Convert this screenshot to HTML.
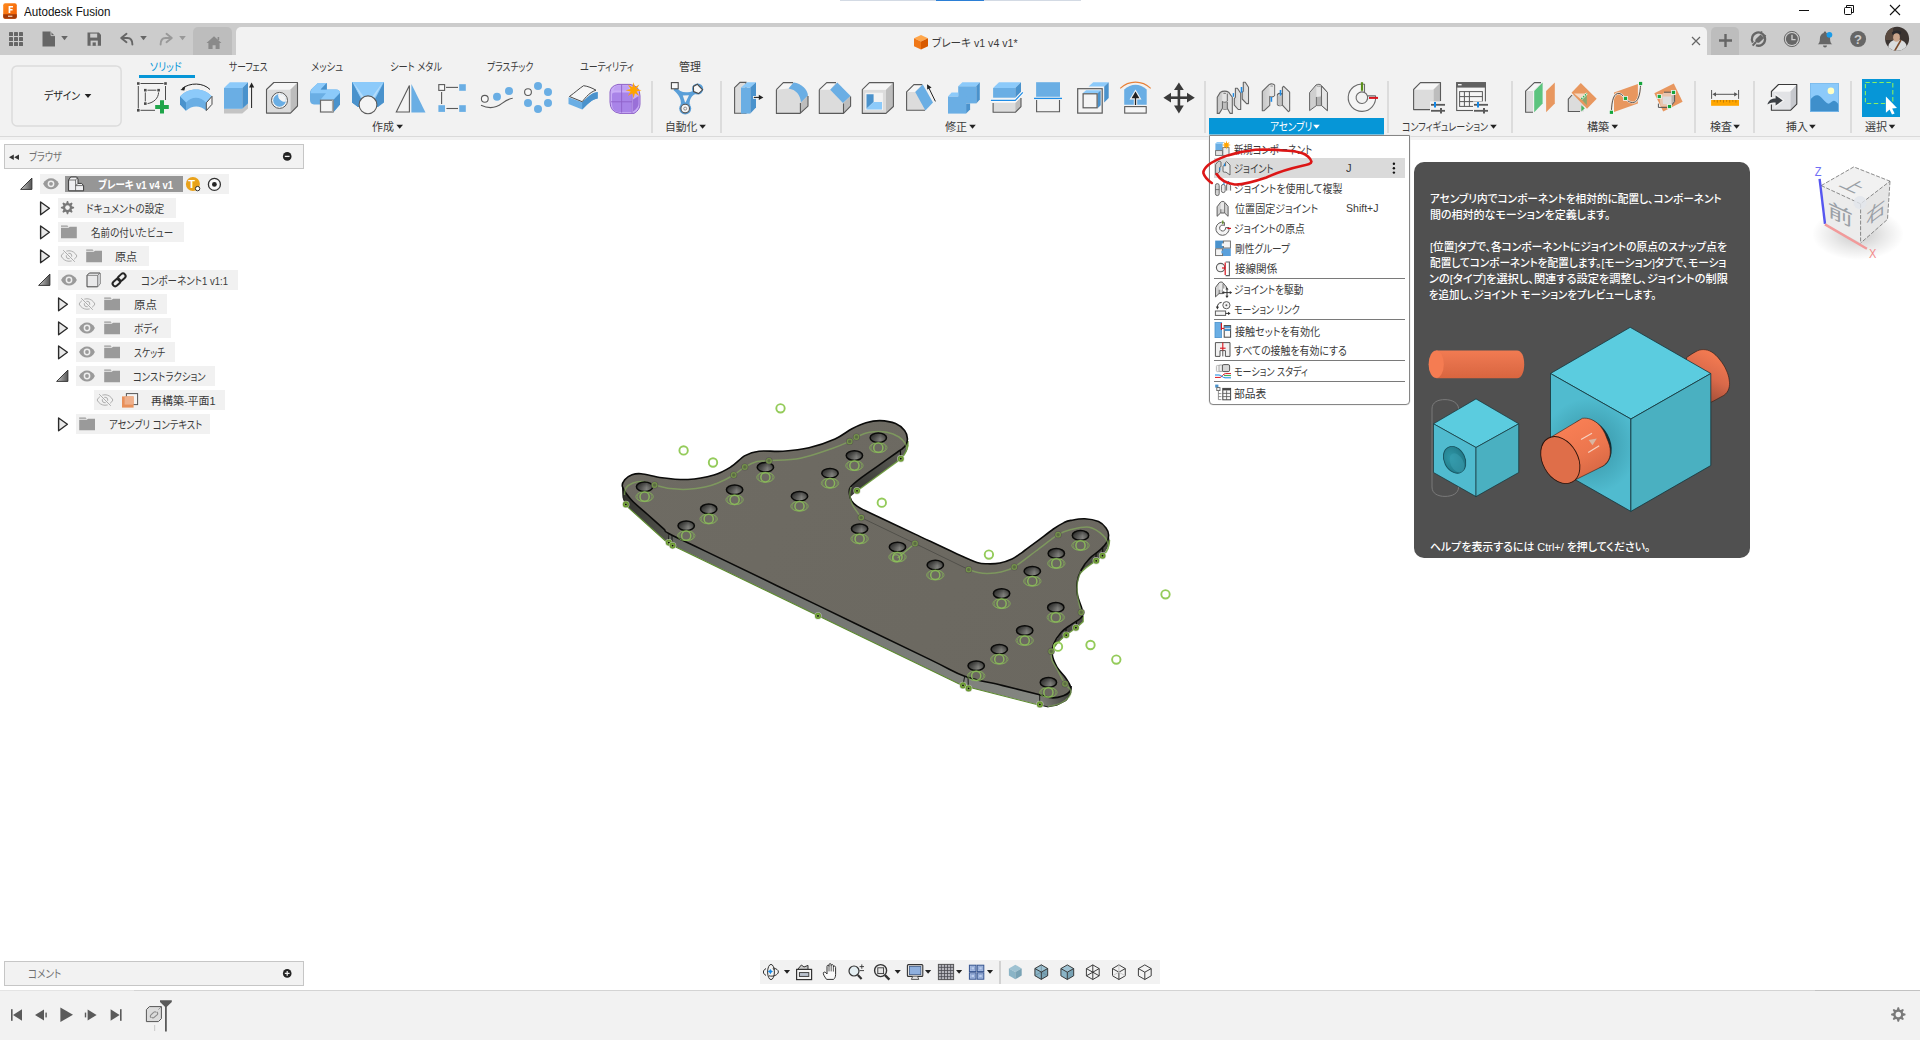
<!DOCTYPE html>
<html lang="ja"><head><meta charset="utf-8"><title>Autodesk Fusion</title>
<style>
html,body{margin:0;padding:0;background:#fff}
#root{position:relative;width:1920px;height:1040px;overflow:hidden;background:#fff;font-family:"Liberation Sans","Noto Sans CJK JP",sans-serif;font-size:12px;font-feature-settings:"palt";-webkit-font-smoothing:antialiased}
.t{position:absolute;white-space:nowrap;display:inline-block;transform-origin:0 50%;letter-spacing:0}
svg.ov{position:absolute;left:0;top:0;width:1920px;height:1040px;overflow:visible}
</style></head>
<body><div id="root">
<div style="position:absolute;left:0px;top:0px;width:1920px;height:23px;background:#fff"></div>
<div style="position:absolute;left:840px;top:0px;width:241px;height:1px;background:#d3dae4"></div>
<div style="position:absolute;left:936px;top:0px;width:48px;height:1px;background:#2b7fd6"></div>
<span class="t" style="left:23.61px;top:4.2px;font-size:12px;line-height:16px;color:#111;font-weight:400;transform:scaleX(0.9676)">Autodesk Fusion</span>
<div style="position:absolute;left:0px;top:23px;width:1920px;height:32px;background:#cccccc"></div>
<div style="position:absolute;left:193px;top:27px;width:39px;height:28px;background:#bdbdbd;border-radius:5px 5px 0 0"></div>
<div style="position:absolute;left:236px;top:27px;width:1471px;height:28px;background:#f2f2f2;border-radius:5px 5px 0 0"></div>
<div style="position:absolute;left:1711px;top:27px;width:28px;height:28px;background:#bdbdbd;border-radius:5px 5px 0 0"></div>
<span class="t" style="left:932.49px;top:34.5px;font-size:11px;line-height:16px;color:#3a3a3a;font-weight:400;transform:scaleX(0.9642)">ブレーキ v1 v4 v1*</span>
<div style="position:absolute;left:0px;top:55px;width:1920px;height:81px;background:#f2f2f2"></div>
<div style="position:absolute;left:0px;top:136px;width:1920px;height:1px;background:#dadada"></div>
<div style="position:absolute;left:0px;top:137px;width:1920px;height:3px;background:#f2f2f2"></div>
<span class="t" style="left:44.49px;top:87.5px;font-size:11px;line-height:16px;color:#222;font-weight:400;transform:scaleX(0.8957)">デザイン</span>
<span class="t" style="left:150.27px;top:59.2px;font-size:11px;line-height:16px;color:#0696d7;font-weight:400;transform:scaleX(0.8922)">ソリッド</span>
<div style="position:absolute;left:139px;top:75px;width:56px;height:3px;background:#0696d7"></div>
<span class="t" style="left:229.23px;top:59.2px;font-size:11px;line-height:16px;color:#3a3a3a;font-weight:400;transform:scaleX(0.7939)">サーフェス</span>
<span class="t" style="left:310.75px;top:59.2px;font-size:11px;line-height:16px;color:#3a3a3a;font-weight:400;transform:scaleX(0.8500)">メッシュ</span>
<span class="t" style="left:389.69px;top:59.2px;font-size:11px;line-height:16px;color:#3a3a3a;font-weight:400;transform:scaleX(0.8367)">シート メタル</span>
<span class="t" style="left:487.49px;top:59.2px;font-size:11px;line-height:16px;color:#3a3a3a;font-weight:400;transform:scaleX(0.8008)">プラスチック</span>
<span class="t" style="left:579.71px;top:59.2px;font-size:11px;line-height:16px;color:#3a3a3a;font-weight:400;transform:scaleX(0.8115)">ユーティリティ</span>
<span class="t" style="left:678.57px;top:59.2px;font-size:11px;line-height:16px;color:#3a3a3a;font-weight:400;transform:scaleX(0.9951)">管理</span>
<div style="position:absolute;left:651.2px;top:81px;width:2.0px;height:52px;background:#dcdcdc"></div>
<div style="position:absolute;left:720.2px;top:81px;width:2.0px;height:52px;background:#dcdcdc"></div>
<div style="position:absolute;left:1203.7px;top:81px;width:2.0px;height:52px;background:#dcdcdc"></div>
<div style="position:absolute;left:1387.2px;top:81px;width:2.0px;height:52px;background:#dcdcdc"></div>
<div style="position:absolute;left:1511.2px;top:81px;width:2.0px;height:52px;background:#dcdcdc"></div>
<div style="position:absolute;left:1694.2px;top:81px;width:2.0px;height:52px;background:#dcdcdc"></div>
<div style="position:absolute;left:1753.2px;top:81px;width:2.0px;height:52px;background:#dcdcdc"></div>
<div style="position:absolute;left:1849.7px;top:81px;width:2.0px;height:52px;background:#dcdcdc"></div>
<div style="position:absolute;left:1209px;top:118px;width:175px;height:18px;background:#0696d7"></div>
<span class="t" style="left:372.16px;top:119.0px;font-size:11px;line-height:16px;color:#3a3a3a;font-weight:400;transform:scaleX(0.9985)">作成</span>
<span class="t" style="left:665.13px;top:119.0px;font-size:11px;line-height:16px;color:#3a3a3a;font-weight:400;transform:scaleX(0.9802)">自動化</span>
<span class="t" style="left:944.71px;top:119.0px;font-size:11px;line-height:16px;color:#3a3a3a;font-weight:400;transform:scaleX(1.0099)">修正</span>
<span class="t" style="left:1270.44px;top:119.0px;font-size:11px;line-height:16px;color:#fff;font-weight:400;transform:scaleX(0.8725)">アセンブリ</span>
<span class="t" style="left:1402.48px;top:119.0px;font-size:11px;line-height:16px;color:#3a3a3a;font-weight:400;transform:scaleX(0.8184)">コンフィギュレーション</span>
<span class="t" style="left:1587.06px;top:119.0px;font-size:11px;line-height:16px;color:#3a3a3a;font-weight:400;transform:scaleX(1.0053)">構築</span>
<span class="t" style="left:1709.67px;top:119.0px;font-size:11px;line-height:16px;color:#3a3a3a;font-weight:400;transform:scaleX(0.9952)">検査</span>
<span class="t" style="left:1785.81px;top:119.0px;font-size:11px;line-height:16px;color:#3a3a3a;font-weight:400;transform:scaleX(0.9901)">挿入</span>
<span class="t" style="left:1865.20px;top:119.0px;font-size:11px;line-height:16px;color:#3a3a3a;font-weight:400;transform:scaleX(1.0019)">選択</span>
<div style="position:absolute;left:1862px;top:79px;width:38px;height:38px;background:#0696d7"></div>
<div style="position:absolute;left:4px;top:144px;width:300px;height:25px;box-sizing:border-box;border:1px solid #c6c6c6;background:#f2f2f2"></div>
<span class="t" style="left:28.98px;top:149.0px;font-size:11px;line-height:16px;color:#707070;font-weight:400;transform:scaleX(0.8287)">ブラウザ</span>
<div style="position:absolute;left:40px;top:174px;width:189px;height:20px;background:#f1f1f1"></div>
<div style="position:absolute;left:58px;top:198px;width:118px;height:20px;background:#f1f1f1"></div>
<div style="position:absolute;left:58px;top:222px;width:126px;height:20px;background:#f1f1f1"></div>
<div style="position:absolute;left:58px;top:246px;width:91px;height:20px;background:#f1f1f1"></div>
<div style="position:absolute;left:58px;top:270px;width:180px;height:20px;background:#f1f1f1"></div>
<div style="position:absolute;left:76px;top:294px;width:91px;height:20px;background:#f1f1f1"></div>
<div style="position:absolute;left:76px;top:318px;width:95px;height:20px;background:#f1f1f1"></div>
<div style="position:absolute;left:76px;top:342px;width:99px;height:20px;background:#f1f1f1"></div>
<div style="position:absolute;left:76px;top:366px;width:139px;height:20px;background:#f1f1f1"></div>
<div style="position:absolute;left:94px;top:390px;width:131px;height:20px;background:#f1f1f1"></div>
<div style="position:absolute;left:76px;top:414px;width:134px;height:20px;background:#f1f1f1"></div>
<div style="position:absolute;left:65px;top:176px;width:118px;height:16px;background:#969696"></div>
<span class="t" style="left:98.36px;top:176.6px;font-size:11px;line-height:16px;color:#fff;font-weight:700;transform:scaleX(0.8626)">ブレーキ v1 v4 v1</span>
<span class="t" style="left:86.06px;top:201.0px;font-size:11px;line-height:16px;color:#3a3a3a;font-weight:400;transform:scaleX(0.8798)">ドキュメントの設定</span>
<span class="t" style="left:91.15px;top:225.0px;font-size:11px;line-height:16px;color:#3a3a3a;font-weight:400;transform:scaleX(0.8677)">名前の付いたビュー</span>
<span class="t" style="left:115.42px;top:249.0px;font-size:11px;line-height:16px;color:#3a3a3a;font-weight:400;transform:scaleX(1.0092)">原点</span>
<span class="t" style="left:140.79px;top:273.0px;font-size:11px;line-height:16px;color:#3a3a3a;font-weight:400;transform:scaleX(0.8659)">コンポーネント1 v1:1</span>
<span class="t" style="left:133.62px;top:297.0px;font-size:11px;line-height:16px;color:#3a3a3a;font-weight:400;transform:scaleX(1.0375)">原点</span>
<span class="t" style="left:134.02px;top:321.0px;font-size:11px;line-height:16px;color:#3a3a3a;font-weight:400;transform:scaleX(0.8651)">ボディ</span>
<span class="t" style="left:134.13px;top:345.0px;font-size:11px;line-height:16px;color:#3a3a3a;font-weight:400;transform:scaleX(0.8023)">スケッチ</span>
<span class="t" style="left:133.30px;top:369.0px;font-size:11px;line-height:16px;color:#3a3a3a;font-weight:400;transform:scaleX(0.8444)">コンストラクション</span>
<span class="t" style="left:151.27px;top:393.0px;font-size:11px;line-height:16px;color:#3a3a3a;font-weight:400;transform:scaleX(0.9963)">再構築-平面1</span>
<span class="t" style="left:108.52px;top:417.0px;font-size:11px;line-height:16px;color:#3a3a3a;font-weight:400;transform:scaleX(0.8466)">アセンブリ コンテキスト</span>
<div style="position:absolute;left:4px;top:961px;width:300px;height:25px;box-sizing:border-box;border:1px solid #c6c6c6;background:#f2f2f2"></div>
<span class="t" style="left:28.23px;top:966.0px;font-size:11px;line-height:16px;color:#707070;font-weight:400;transform:scaleX(0.8705)">コメント</span>
<div style="position:absolute;left:0px;top:990px;width:1920px;height:1px;background:#d4d4d4"></div>
<div style="position:absolute;left:0px;top:991px;width:1920px;height:49px;background:#f2f2f2"></div>
<div style="position:absolute;left:0px;top:990px;width:134px;height:1px;background:#e4e4e4"></div>
<div style="position:absolute;left:1815px;top:990px;width:105px;height:1px;background:#c2c2c2"></div>
<div style="position:absolute;left:760px;top:960px;width:400px;height:24px;background:#f2f2f2"></div>
<div style="position:absolute;left:999px;top:961px;width:2px;height:23px;background:#d2d2d2"></div>
<svg class="ov" width="1920" height="1040" viewBox="0 0 1920 1040">
<defs><linearGradient id="sd1" gradientUnits="userSpaceOnUse" x1="668" y1="535" x2="1040" y2="700"><stop offset="0" stop-color="#62645f"/><stop offset="0.25" stop-color="#70726e"/><stop offset="1" stop-color="#848681"/></linearGradient><linearGradient id="sd0" gradientUnits="userSpaceOnUse" x1="623" y1="490" x2="668" y2="540"><stop offset="0" stop-color="#2f2f2b"/><stop offset="1" stop-color="#54554f"/></linearGradient><linearGradient id="sd3" gradientUnits="userSpaceOnUse" x1="1040" y1="700" x2="1072" y2="690"><stop offset="0" stop-color="#7c7c76"/><stop offset="1" stop-color="#3c3c38"/></linearGradient><linearGradient id="sd2" gradientUnits="userSpaceOnUse" x1="856" y1="490" x2="905" y2="450"><stop offset="0" stop-color="#3a3a36"/><stop offset="0.5" stop-color="#4c4c47"/><stop offset="1" stop-color="#5e5e58"/></linearGradient><linearGradient id="hg" x1="0" y1="0" x2="1" y2="0"><stop offset="0" stop-color="#3e3e3c"/><stop offset="0.3" stop-color="#5e5e5b"/><stop offset="0.62" stop-color="#8a8a86"/><stop offset="0.85" stop-color="#6a6a66"/><stop offset="1" stop-color="#444441"/></linearGradient><linearGradient id="hg2" x1="0" y1="0" x2="0" y2="1"><stop offset="0" stop-color="#000" stop-opacity="0.5"/><stop offset="0.55" stop-color="#000" stop-opacity="0.12"/><stop offset="1" stop-color="#000" stop-opacity="0"/></linearGradient><linearGradient id="tf" gradientUnits="userSpaceOnUse" x1="620" y1="430" x2="1100" y2="700"><stop offset="0" stop-color="#6e6b63"/><stop offset="1" stop-color="#6b6860"/></linearGradient></defs>
<polygon points="668.0,543.0 962.3,685.4 1039.7,705.0 1040.0,690.0 964.7,672.0 668.8,529.0" fill="url(#sd1)" />
<polygon points="622.5,486.7 623.0,497.6 625.6,505.0 668.0,543.0 668.8,529.0 628.0,490.0" fill="url(#sd0)" />
<polygon points="1039.7,690.0 1039.7,705.0 1047.8,706.9 1057.0,705.2 1066.4,700.4 1070.8,694.0 1071.4,686.0 1060.0,688.0" fill="url(#sd3)" />
<path d="M622.5 486.7 L623 497.6 L625.6 505 M1039.7 705 L1047.8 706.9 L1057 705.2 L1066.4 700.4 L1070.8 693 L1071.4 686" fill="none" stroke="#1a1a18" stroke-width="1" stroke-linejoin="round"/>
<polygon points="907.4,438.6 908.2,446.0 906.4,452.0 900.8,459.0 857.0,491.0 850.2,497.0 849.4,490.0 855.8,481.5 902.5,448.6" fill="url(#sd2)" />
<path d="M908 441 C908.6 447 907 452.4 900.8 459 L857 491" fill="none" stroke="#6d9c3c" stroke-width="1.4" opacity="0.9"/>
<line x1="900.4" y1="449.6" x2="900.6" y2="458.4" stroke="#0b0b0a" stroke-width="1.2" />
<polygon points="1108.6,535.0 1109.6,540.0 1108.9,545.5 1102.9,555.4 1096.2,560.9 1085.6,567.7 1079.6,574.0 1081.3,569.8 1089.8,558.2 1100.4,549.7 1106.7,542.3" fill="#4b4b46" />
<path d="M1109.6 540 C1109.8 547 1107 551.6 1102.9 555.4 L1096.2 560.9 C1091 564 1084 569 1079.6 574" fill="none" stroke="#6d9c3c" stroke-width="1.3" opacity="0.9"/>
<path d="M1102.7 547.4 V555.6 M1096 552.8 V561" fill="none" stroke="#0b0b0a" stroke-width="1.1" />
<polygon points="1083.0,614.2 1083.2,621.6 1076.7,627.6 1066.1,635.0 1058.1,642.8 1051.4,651.6 1053.8,643.9 1061.3,632.2 1070.8,624.8 1080.3,618.5" fill="#4b4b46" />
<path d="M1083.2 616 V621.6 L1076.7 627.6 L1066.1 635 C1061.6 638.6 1055 645 1051.4 651.6" fill="none" stroke="#6d9c3c" stroke-width="1.3" opacity="0.9"/>
<path d="M1076.5 620.6 V627.6 M1066 628.6 V635" fill="none" stroke="#0b0b0a" stroke-width="1.1" />
<path d="M622.5 486.7 C621.4 483.3 623.5 481.6 625.0 479.6 C626.5 477.7 628.8 476.0 631.5 475.0 C634.2 474.0 635.9 473.2 641.0 473.7 C646.1 474.1 654.2 476.7 662.0 477.7 C669.8 478.7 679.3 479.9 688.0 479.5 C696.7 479.1 706.8 477.1 714.0 475.0 C721.2 472.9 725.8 470.0 731.0 466.8 C736.2 463.6 740.3 458.2 745.0 455.6 C749.7 453.0 752.7 451.9 759.0 451.2 C765.3 450.5 774.7 451.8 783.0 451.2 C791.3 450.6 800.3 449.8 809.0 447.8 C817.7 445.8 827.8 442.2 835.0 439.0 C842.2 435.8 846.8 431.4 852.0 428.7 C857.2 426.0 861.3 424.0 866.0 422.7 C870.7 421.4 875.1 420.5 880.0 420.6 C884.9 420.8 891.5 421.9 895.6 423.6 C899.7 425.3 902.6 428.1 904.6 430.6 C906.6 433.1 907.2 436.3 907.4 438.6 C907.6 440.9 906.8 442.9 906.0 444.6 C905.2 446.3 904.0 447.3 902.5 448.6 C901.0 449.9 900.8 449.8 896.9 452.5 C893.0 455.3 885.1 460.9 879.1 465.1 C873.2 469.2 866.2 473.9 861.4 477.6 C856.6 481.2 852.6 484.3 850.6 487.0 C848.6 489.7 849.2 491.3 849.4 493.6 C849.6 495.9 850.3 498.9 851.6 501.0 C852.9 503.1 855.1 504.8 857.0 506.2 C858.9 507.6 859.9 508.1 863.0 509.6 C866.1 511.1 866.8 511.4 875.5 515.5 C884.1 519.6 901.8 527.9 915.0 534.1 C928.2 540.3 944.2 548.0 954.5 552.7 C964.9 557.4 971.5 560.6 977.0 562.4 C982.5 564.2 983.9 563.7 987.7 563.8 C991.5 563.9 996.0 563.8 1000.0 563.0 C1004.0 562.2 1008.7 560.5 1012.0 559.0 C1015.3 557.5 1017.9 555.3 1020.0 553.9 C1022.1 552.5 1021.4 552.9 1024.6 550.5 C1027.7 548.1 1034.2 543.3 1039.0 539.8 C1043.8 536.2 1049.3 531.9 1053.4 529.0 C1057.6 526.1 1061.1 524.0 1064.0 522.6 C1066.9 521.2 1067.3 521.0 1070.8 520.4 C1074.2 519.8 1080.1 518.6 1084.7 518.8 C1089.3 519.0 1095.0 520.1 1098.5 521.6 C1102.0 523.1 1104.3 525.8 1106.0 528.0 C1107.7 530.2 1108.5 532.6 1108.6 535.0 C1108.7 537.4 1108.1 539.8 1106.7 542.3 C1105.3 544.8 1103.2 547.1 1100.4 549.7 C1097.6 552.4 1093.0 554.9 1089.8 558.2 C1086.6 561.6 1083.4 565.8 1081.3 569.8 C1079.2 573.8 1077.7 578.3 1077.1 582.5 C1076.5 586.7 1076.8 591.2 1077.5 595.2 C1078.2 599.2 1080.4 603.6 1081.3 606.8 C1082.2 610.0 1083.2 612.2 1083.0 614.2 C1082.8 616.2 1082.3 616.7 1080.3 618.5 C1078.3 620.3 1074.0 622.5 1070.8 624.8 C1067.6 627.1 1064.1 629.0 1061.3 632.2 C1058.5 635.4 1055.3 640.2 1053.8 643.9 C1052.3 647.6 1051.7 650.5 1052.2 654.4 C1052.7 658.3 1054.8 663.2 1057.0 667.1 C1059.2 671.0 1063.3 674.5 1065.5 677.7 C1067.7 680.9 1069.6 683.9 1070.3 686.2 C1071.0 688.5 1070.8 689.9 1069.7 691.5 C1068.6 693.1 1066.4 694.7 1063.4 695.7 C1060.4 696.8 1055.7 698.0 1051.7 697.8 C1047.8 697.6 1048.0 696.8 1039.7 694.7 C1031.4 692.6 1014.5 688.5 1002.0 685.4 C989.5 682.3 976.8 680.6 964.7 676.2 C952.6 671.8 953.9 671.0 929.2 659.1 C904.5 647.2 854.2 622.9 816.8 604.9 C779.3 586.8 729.0 562.5 704.3 550.6 C679.6 538.7 675.6 537.1 668.8 533.5 C662.0 529.9 667.2 532.1 663.7 528.9 C660.2 525.8 653.0 519.3 647.6 514.5 C642.2 509.6 635.7 504.6 631.5 500.0 C627.3 495.3 623.6 490.1 622.5 486.7 Z" fill="url(#tf)" stroke="#0b0b0a" stroke-width="1.6" stroke-linejoin="round"/>
<path d="M668.8 533.5 L668.4 543 M672 535.2 L672 545 M964.7 676.2 L963 685.4 M968 677.2 L968.4 688 M1039.7 694.7 V705" fill="none" stroke="#0d0d0c" stroke-width="0.9" />
<path d="M624.4 495.0 C624.7 493.8 624.6 490.0 626.0 488.0 C627.4 486.0 630.2 484.1 633.0 483.0 C635.8 481.9 639.4 481.3 643.0 481.6 C646.6 481.9 650.1 483.8 654.6 485.0 C659.1 486.2 664.4 487.9 670.0 488.6 C675.6 489.3 682.2 489.6 688.0 489.3 C693.8 489.0 700.1 488.0 705.0 487.0 C709.9 486.0 712.5 485.3 717.3 483.3 C722.1 481.3 729.1 477.8 733.7 475.0 C738.3 472.2 741.1 469.0 745.0 466.8 C748.9 464.6 753.0 462.6 757.0 461.6 C761.0 460.6 762.0 461.4 769.2 460.8 C776.4 460.2 790.0 460.2 800.4 458.2 C810.8 456.2 823.3 451.5 831.5 448.7 C839.7 445.9 845.5 443.3 849.7 441.4 C853.9 439.4 853.3 438.5 856.6 437.0 C859.9 435.5 864.6 433.0 869.6 432.2 C874.6 431.4 882.0 431.4 886.9 432.2 C891.8 433.0 895.9 435.0 899.0 437.0 C902.1 439.0 904.3 441.8 905.6 444.0 C906.9 446.2 906.8 449.0 907.0 450.0" fill="none" stroke="#88b65c" stroke-width="1.5" opacity="0.6"/>
<path d="M851.0 487.0 C850.8 488.3 849.5 492.0 849.8 495.0 C850.1 498.0 850.7 501.2 852.6 505.0 C854.5 508.8 859.8 515.5 861.2 517.6" fill="none" stroke="#88b65c" stroke-width="1.5" opacity="0.6"/>
<polyline points="861.2,517.6 915.0,543.5 968.6,569.6" fill="none" stroke="#4e4d47" stroke-width="0.9" />
<path d="M968.6 569.6 C970.2 570.1 974.8 572.0 978.0 572.6 C981.2 573.2 983.9 573.6 987.7 573.5 C991.5 573.4 996.6 573.1 1001.0 572.0 C1005.4 570.9 1008.5 570.5 1014.3 567.0 C1020.1 563.5 1028.7 556.4 1036.0 551.0 C1043.3 545.6 1052.3 538.3 1058.1 534.7 C1063.9 531.1 1065.6 530.8 1070.8 529.6 C1076.0 528.4 1083.9 526.3 1089.3 527.3 C1094.7 528.3 1099.8 532.4 1103.0 535.4 C1106.2 538.4 1107.9 542.1 1108.4 545.0 C1108.9 547.9 1106.4 551.7 1106.0 553.0" fill="none" stroke="#88b65c" stroke-width="1.5" opacity="0.6"/>
<path d="M1051.2 651.3 C1051.3 652.8 1051.0 657.0 1052.0 660.0 C1053.0 663.0 1054.8 665.0 1057.0 669.0 C1059.2 673.0 1062.7 680.3 1065.0 683.8 C1067.3 687.3 1069.9 687.8 1070.6 690.0 C1071.3 692.2 1070.8 694.7 1069.0 697.0 C1067.2 699.3 1063.5 702.0 1060.0 703.6 C1056.5 705.2 1050.0 706.1 1048.0 706.6" fill="none" stroke="#88b65c" stroke-width="1.5" opacity="0.6"/>
<path d="M1081.0 571.0 C1080.4 572.9 1078.0 578.4 1077.4 582.6 C1076.8 586.8 1077.0 591.0 1077.6 596.0 C1078.2 601.0 1080.6 609.6 1081.2 612.3" fill="none" stroke="#88b65c" stroke-width="1.5" opacity="0.6"/>
<polyline points="897.6,558.0 915.0,543.5" fill="none" stroke="#88b65c" stroke-width="1.1" opacity="0.8"/>
<path d="M625.6 505.2 L668 543.2 L962.3 685.6 L1039.7 705.2" fill="none" stroke="#5b8a2c" stroke-width="1.1" />
<ellipse cx="644.6" cy="486.7" rx="8.2" ry="4.8" fill="url(#hg)" />
<ellipse cx="644.6" cy="486.7" rx="8.2" ry="4.8" fill="url(#hg2)" stroke="#0b0b0a" stroke-width="1.5" />
<ellipse cx="644.6" cy="496.7" rx="8.8" ry="5" fill="none" stroke="#8abf58" stroke-width="1" opacity="0.55"/>
<path d="M641.7 492.2 A4.5 4.5 0 0 0 641.7 501.2" fill="none" stroke="#8abf58" stroke-width="1" opacity="0.5"/>
<path d="M647.5 492.2 A4.5 4.5 0 0 1 647.5 501.2" fill="none" stroke="#8abf58" stroke-width="1" opacity="0.5"/>
<circle cx="644.6" cy="496.7" r="4.6" fill="none" stroke="#8cbe5a" stroke-width="1.5" opacity="0.9"/>
<ellipse cx="686.2" cy="525.7" rx="8.2" ry="4.8" fill="url(#hg)" />
<ellipse cx="686.2" cy="525.7" rx="8.2" ry="4.8" fill="url(#hg2)" stroke="#0b0b0a" stroke-width="1.5" />
<ellipse cx="686.2" cy="535.7" rx="8.8" ry="5" fill="none" stroke="#8abf58" stroke-width="1" opacity="0.55"/>
<path d="M683.3 531.2 A4.5 4.5 0 0 0 683.3 540.2" fill="none" stroke="#8abf58" stroke-width="1" opacity="0.5"/>
<path d="M689.1 531.2 A4.5 4.5 0 0 1 689.1 540.2" fill="none" stroke="#8abf58" stroke-width="1" opacity="0.5"/>
<circle cx="686.2" cy="535.7" r="4.6" fill="none" stroke="#8cbe5a" stroke-width="1.5" opacity="0.9"/>
<ellipse cx="708.7" cy="508.9" rx="8.2" ry="4.8" fill="url(#hg)" />
<ellipse cx="708.7" cy="508.9" rx="8.2" ry="4.8" fill="url(#hg2)" stroke="#0b0b0a" stroke-width="1.5" />
<ellipse cx="708.7" cy="518.9" rx="8.8" ry="5" fill="none" stroke="#8abf58" stroke-width="1" opacity="0.55"/>
<path d="M705.8 514.4 A4.5 4.5 0 0 0 705.8 523.4" fill="none" stroke="#8abf58" stroke-width="1" opacity="0.5"/>
<path d="M711.6 514.4 A4.5 4.5 0 0 1 711.6 523.4" fill="none" stroke="#8abf58" stroke-width="1" opacity="0.5"/>
<circle cx="708.7" cy="518.9" r="4.6" fill="none" stroke="#8cbe5a" stroke-width="1.5" opacity="0.9"/>
<ellipse cx="734.6" cy="489.8" rx="8.2" ry="4.8" fill="url(#hg)" />
<ellipse cx="734.6" cy="489.8" rx="8.2" ry="4.8" fill="url(#hg2)" stroke="#0b0b0a" stroke-width="1.5" />
<ellipse cx="734.6" cy="499.8" rx="8.8" ry="5" fill="none" stroke="#8abf58" stroke-width="1" opacity="0.55"/>
<path d="M731.7 495.3 A4.5 4.5 0 0 0 731.7 504.3" fill="none" stroke="#8abf58" stroke-width="1" opacity="0.5"/>
<path d="M737.5 495.3 A4.5 4.5 0 0 1 737.5 504.3" fill="none" stroke="#8abf58" stroke-width="1" opacity="0.5"/>
<circle cx="734.6" cy="499.8" r="4.6" fill="none" stroke="#8cbe5a" stroke-width="1.5" opacity="0.9"/>
<ellipse cx="765.4" cy="467.3" rx="8.2" ry="4.8" fill="url(#hg)" />
<ellipse cx="765.4" cy="467.3" rx="8.2" ry="4.8" fill="url(#hg2)" stroke="#0b0b0a" stroke-width="1.5" />
<ellipse cx="765.4" cy="477.3" rx="8.8" ry="5" fill="none" stroke="#8abf58" stroke-width="1" opacity="0.55"/>
<path d="M762.5 472.8 A4.5 4.5 0 0 0 762.5 481.8" fill="none" stroke="#8abf58" stroke-width="1" opacity="0.5"/>
<path d="M768.3 472.8 A4.5 4.5 0 0 1 768.3 481.8" fill="none" stroke="#8abf58" stroke-width="1" opacity="0.5"/>
<circle cx="765.4" cy="477.3" r="4.6" fill="none" stroke="#8cbe5a" stroke-width="1.5" opacity="0.9"/>
<ellipse cx="799.5" cy="496.2" rx="8.2" ry="4.8" fill="url(#hg)" />
<ellipse cx="799.5" cy="496.2" rx="8.2" ry="4.8" fill="url(#hg2)" stroke="#0b0b0a" stroke-width="1.5" />
<ellipse cx="799.5" cy="506.2" rx="8.8" ry="5" fill="none" stroke="#8abf58" stroke-width="1" opacity="0.55"/>
<path d="M796.6 501.7 A4.5 4.5 0 0 0 796.6 510.7" fill="none" stroke="#8abf58" stroke-width="1" opacity="0.5"/>
<path d="M802.4 501.7 A4.5 4.5 0 0 1 802.4 510.7" fill="none" stroke="#8abf58" stroke-width="1" opacity="0.5"/>
<circle cx="799.5" cy="506.2" r="4.6" fill="none" stroke="#8cbe5a" stroke-width="1.5" opacity="0.9"/>
<ellipse cx="830.0" cy="473.2" rx="8.2" ry="4.8" fill="url(#hg)" />
<ellipse cx="830.0" cy="473.2" rx="8.2" ry="4.8" fill="url(#hg2)" stroke="#0b0b0a" stroke-width="1.5" />
<ellipse cx="830.0" cy="483.2" rx="8.8" ry="5" fill="none" stroke="#8abf58" stroke-width="1" opacity="0.55"/>
<path d="M827.1 478.7 A4.5 4.5 0 0 0 827.1 487.7" fill="none" stroke="#8abf58" stroke-width="1" opacity="0.5"/>
<path d="M832.9 478.7 A4.5 4.5 0 0 1 832.9 487.7" fill="none" stroke="#8abf58" stroke-width="1" opacity="0.5"/>
<circle cx="830.0" cy="483.2" r="4.6" fill="none" stroke="#8cbe5a" stroke-width="1.5" opacity="0.9"/>
<ellipse cx="854.4" cy="455.6" rx="8.2" ry="4.8" fill="url(#hg)" />
<ellipse cx="854.4" cy="455.6" rx="8.2" ry="4.8" fill="url(#hg2)" stroke="#0b0b0a" stroke-width="1.5" />
<ellipse cx="854.4" cy="465.6" rx="8.8" ry="5" fill="none" stroke="#8abf58" stroke-width="1" opacity="0.55"/>
<path d="M851.5 461.1 A4.5 4.5 0 0 0 851.5 470.1" fill="none" stroke="#8abf58" stroke-width="1" opacity="0.5"/>
<path d="M857.3 461.1 A4.5 4.5 0 0 1 857.3 470.1" fill="none" stroke="#8abf58" stroke-width="1" opacity="0.5"/>
<circle cx="854.4" cy="465.6" r="4.6" fill="none" stroke="#8cbe5a" stroke-width="1.5" opacity="0.9"/>
<ellipse cx="878.3" cy="437.7" rx="8.2" ry="4.8" fill="url(#hg)" />
<ellipse cx="878.3" cy="437.7" rx="8.2" ry="4.8" fill="url(#hg2)" stroke="#0b0b0a" stroke-width="1.5" />
<ellipse cx="878.3" cy="447.7" rx="8.8" ry="5" fill="none" stroke="#8abf58" stroke-width="1" opacity="0.55"/>
<path d="M875.4 443.2 A4.5 4.5 0 0 0 875.4 452.2" fill="none" stroke="#8abf58" stroke-width="1" opacity="0.5"/>
<path d="M881.2 443.2 A4.5 4.5 0 0 1 881.2 452.2" fill="none" stroke="#8abf58" stroke-width="1" opacity="0.5"/>
<circle cx="878.3" cy="447.7" r="4.6" fill="none" stroke="#8cbe5a" stroke-width="1.5" opacity="0.9"/>
<ellipse cx="859.6" cy="528.8" rx="8.2" ry="4.8" fill="url(#hg)" />
<ellipse cx="859.6" cy="528.8" rx="8.2" ry="4.8" fill="url(#hg2)" stroke="#0b0b0a" stroke-width="1.5" />
<ellipse cx="859.6" cy="538.8" rx="8.8" ry="5" fill="none" stroke="#8abf58" stroke-width="1" opacity="0.55"/>
<path d="M856.7 534.3 A4.5 4.5 0 0 0 856.7 543.3" fill="none" stroke="#8abf58" stroke-width="1" opacity="0.5"/>
<path d="M862.5 534.3 A4.5 4.5 0 0 1 862.5 543.3" fill="none" stroke="#8abf58" stroke-width="1" opacity="0.5"/>
<circle cx="859.6" cy="538.8" r="4.6" fill="none" stroke="#8cbe5a" stroke-width="1.5" opacity="0.9"/>
<ellipse cx="897.5" cy="547.0" rx="8.2" ry="4.8" fill="url(#hg)" />
<ellipse cx="897.5" cy="547.0" rx="8.2" ry="4.8" fill="url(#hg2)" stroke="#0b0b0a" stroke-width="1.5" />
<ellipse cx="897.5" cy="557.0" rx="8.8" ry="5" fill="none" stroke="#8abf58" stroke-width="1" opacity="0.55"/>
<path d="M894.6 552.5 A4.5 4.5 0 0 0 894.6 561.5" fill="none" stroke="#8abf58" stroke-width="1" opacity="0.5"/>
<path d="M900.4 552.5 A4.5 4.5 0 0 1 900.4 561.5" fill="none" stroke="#8abf58" stroke-width="1" opacity="0.5"/>
<circle cx="897.5" cy="557.0" r="4.6" fill="none" stroke="#8cbe5a" stroke-width="1.5" opacity="0.9"/>
<ellipse cx="935.3" cy="565.0" rx="8.2" ry="4.8" fill="url(#hg)" />
<ellipse cx="935.3" cy="565.0" rx="8.2" ry="4.8" fill="url(#hg2)" stroke="#0b0b0a" stroke-width="1.5" />
<ellipse cx="935.3" cy="575.0" rx="8.8" ry="5" fill="none" stroke="#8abf58" stroke-width="1" opacity="0.55"/>
<path d="M932.4 570.5 A4.5 4.5 0 0 0 932.4 579.5" fill="none" stroke="#8abf58" stroke-width="1" opacity="0.5"/>
<path d="M938.2 570.5 A4.5 4.5 0 0 1 938.2 579.5" fill="none" stroke="#8abf58" stroke-width="1" opacity="0.5"/>
<circle cx="935.3" cy="575.0" r="4.6" fill="none" stroke="#8cbe5a" stroke-width="1.5" opacity="0.9"/>
<ellipse cx="1001.6" cy="593.6" rx="8.2" ry="4.8" fill="url(#hg)" />
<ellipse cx="1001.6" cy="593.6" rx="8.2" ry="4.8" fill="url(#hg2)" stroke="#0b0b0a" stroke-width="1.5" />
<ellipse cx="1001.6" cy="603.6" rx="8.8" ry="5" fill="none" stroke="#8abf58" stroke-width="1" opacity="0.55"/>
<path d="M998.7 599.1 A4.5 4.5 0 0 0 998.7 608.1" fill="none" stroke="#8abf58" stroke-width="1" opacity="0.5"/>
<path d="M1004.5 599.1 A4.5 4.5 0 0 1 1004.5 608.1" fill="none" stroke="#8abf58" stroke-width="1" opacity="0.5"/>
<circle cx="1001.6" cy="603.6" r="4.6" fill="none" stroke="#8cbe5a" stroke-width="1.5" opacity="0.9"/>
<ellipse cx="1032.3" cy="571.2" rx="8.2" ry="4.8" fill="url(#hg)" />
<ellipse cx="1032.3" cy="571.2" rx="8.2" ry="4.8" fill="url(#hg2)" stroke="#0b0b0a" stroke-width="1.5" />
<ellipse cx="1032.3" cy="581.2" rx="8.8" ry="5" fill="none" stroke="#8abf58" stroke-width="1" opacity="0.55"/>
<path d="M1029.4 576.7 A4.5 4.5 0 0 0 1029.4 585.7" fill="none" stroke="#8abf58" stroke-width="1" opacity="0.5"/>
<path d="M1035.2 576.7 A4.5 4.5 0 0 1 1035.2 585.7" fill="none" stroke="#8abf58" stroke-width="1" opacity="0.5"/>
<circle cx="1032.3" cy="581.2" r="4.6" fill="none" stroke="#8cbe5a" stroke-width="1.5" opacity="0.9"/>
<ellipse cx="1056.3" cy="553.4" rx="8.2" ry="4.8" fill="url(#hg)" />
<ellipse cx="1056.3" cy="553.4" rx="8.2" ry="4.8" fill="url(#hg2)" stroke="#0b0b0a" stroke-width="1.5" />
<ellipse cx="1056.3" cy="563.4" rx="8.8" ry="5" fill="none" stroke="#8abf58" stroke-width="1" opacity="0.55"/>
<path d="M1053.4 558.9 A4.5 4.5 0 0 0 1053.4 567.9" fill="none" stroke="#8abf58" stroke-width="1" opacity="0.5"/>
<path d="M1059.2 558.9 A4.5 4.5 0 0 1 1059.2 567.9" fill="none" stroke="#8abf58" stroke-width="1" opacity="0.5"/>
<circle cx="1056.3" cy="563.4" r="4.6" fill="none" stroke="#8cbe5a" stroke-width="1.5" opacity="0.9"/>
<ellipse cx="1080.5" cy="535.4" rx="8.2" ry="4.8" fill="url(#hg)" />
<ellipse cx="1080.5" cy="535.4" rx="8.2" ry="4.8" fill="url(#hg2)" stroke="#0b0b0a" stroke-width="1.5" />
<ellipse cx="1080.5" cy="545.4" rx="8.8" ry="5" fill="none" stroke="#8abf58" stroke-width="1" opacity="0.55"/>
<path d="M1077.6 540.9 A4.5 4.5 0 0 0 1077.6 549.9" fill="none" stroke="#8abf58" stroke-width="1" opacity="0.5"/>
<path d="M1083.4 540.9 A4.5 4.5 0 0 1 1083.4 549.9" fill="none" stroke="#8abf58" stroke-width="1" opacity="0.5"/>
<circle cx="1080.5" cy="545.4" r="4.6" fill="none" stroke="#8cbe5a" stroke-width="1.5" opacity="0.9"/>
<ellipse cx="1055.8" cy="607.4" rx="8.2" ry="4.8" fill="url(#hg)" />
<ellipse cx="1055.8" cy="607.4" rx="8.2" ry="4.8" fill="url(#hg2)" stroke="#0b0b0a" stroke-width="1.5" />
<ellipse cx="1055.8" cy="617.4" rx="8.8" ry="5" fill="none" stroke="#8abf58" stroke-width="1" opacity="0.55"/>
<path d="M1052.9 612.9 A4.5 4.5 0 0 0 1052.9 621.9" fill="none" stroke="#8abf58" stroke-width="1" opacity="0.5"/>
<path d="M1058.7 612.9 A4.5 4.5 0 0 1 1058.7 621.9" fill="none" stroke="#8abf58" stroke-width="1" opacity="0.5"/>
<circle cx="1055.8" cy="617.4" r="4.6" fill="none" stroke="#8cbe5a" stroke-width="1.5" opacity="0.9"/>
<ellipse cx="1024.7" cy="630.5" rx="8.2" ry="4.8" fill="url(#hg)" />
<ellipse cx="1024.7" cy="630.5" rx="8.2" ry="4.8" fill="url(#hg2)" stroke="#0b0b0a" stroke-width="1.5" />
<ellipse cx="1024.7" cy="640.5" rx="8.8" ry="5" fill="none" stroke="#8abf58" stroke-width="1" opacity="0.55"/>
<path d="M1021.8 636.0 A4.5 4.5 0 0 0 1021.8 645.0" fill="none" stroke="#8abf58" stroke-width="1" opacity="0.5"/>
<path d="M1027.6 636.0 A4.5 4.5 0 0 1 1027.6 645.0" fill="none" stroke="#8abf58" stroke-width="1" opacity="0.5"/>
<circle cx="1024.7" cy="640.5" r="4.6" fill="none" stroke="#8cbe5a" stroke-width="1.5" opacity="0.9"/>
<ellipse cx="999.3" cy="649.2" rx="8.2" ry="4.8" fill="url(#hg)" />
<ellipse cx="999.3" cy="649.2" rx="8.2" ry="4.8" fill="url(#hg2)" stroke="#0b0b0a" stroke-width="1.5" />
<ellipse cx="999.3" cy="659.2" rx="8.8" ry="5" fill="none" stroke="#8abf58" stroke-width="1" opacity="0.55"/>
<path d="M996.4 654.7 A4.5 4.5 0 0 0 996.4 663.7" fill="none" stroke="#8abf58" stroke-width="1" opacity="0.5"/>
<path d="M1002.2 654.7 A4.5 4.5 0 0 1 1002.2 663.7" fill="none" stroke="#8abf58" stroke-width="1" opacity="0.5"/>
<circle cx="999.3" cy="659.2" r="4.6" fill="none" stroke="#8cbe5a" stroke-width="1.5" opacity="0.9"/>
<ellipse cx="976.2" cy="665.8" rx="8.2" ry="4.8" fill="url(#hg)" />
<ellipse cx="976.2" cy="665.8" rx="8.2" ry="4.8" fill="url(#hg2)" stroke="#0b0b0a" stroke-width="1.5" />
<ellipse cx="976.2" cy="675.8" rx="8.8" ry="5" fill="none" stroke="#8abf58" stroke-width="1" opacity="0.55"/>
<path d="M973.3 671.3 A4.5 4.5 0 0 0 973.3 680.3" fill="none" stroke="#8abf58" stroke-width="1" opacity="0.5"/>
<path d="M979.1 671.3 A4.5 4.5 0 0 1 979.1 680.3" fill="none" stroke="#8abf58" stroke-width="1" opacity="0.5"/>
<circle cx="976.2" cy="675.8" r="4.6" fill="none" stroke="#8cbe5a" stroke-width="1.5" opacity="0.9"/>
<ellipse cx="1048.4" cy="682.4" rx="8.2" ry="4.8" fill="url(#hg)" />
<ellipse cx="1048.4" cy="682.4" rx="8.2" ry="4.8" fill="url(#hg2)" stroke="#0b0b0a" stroke-width="1.5" />
<ellipse cx="1048.4" cy="692.4" rx="8.8" ry="5" fill="none" stroke="#8abf58" stroke-width="1" opacity="0.55"/>
<path d="M1045.5 687.9 A4.5 4.5 0 0 0 1045.5 696.9" fill="none" stroke="#8abf58" stroke-width="1" opacity="0.5"/>
<path d="M1051.3 687.9 A4.5 4.5 0 0 1 1051.3 696.9" fill="none" stroke="#8abf58" stroke-width="1" opacity="0.5"/>
<circle cx="1048.4" cy="692.4" r="4.6" fill="none" stroke="#8cbe5a" stroke-width="1.5" opacity="0.9"/>
<circle cx="896.0" cy="558.4" r="3.6" fill="none" stroke="#8fc45c" stroke-width="1.1" opacity="0.8"/>
<circle cx="654.6" cy="485.0" r="3.6" fill="#57564f" opacity="0.85"/>
<circle cx="654.6" cy="485.0" r="2.3" fill="#63654f" stroke="#739548" stroke-width="1.2" />
<circle cx="654.6" cy="485.0" r="0.9" fill="#55753a" />
<circle cx="733.7" cy="475.0" r="3.6" fill="#57564f" opacity="0.85"/>
<circle cx="733.7" cy="475.0" r="2.3" fill="#63654f" stroke="#739548" stroke-width="1.2" />
<circle cx="733.7" cy="475.0" r="0.9" fill="#55753a" />
<circle cx="744.8" cy="467.0" r="3.6" fill="#57564f" opacity="0.85"/>
<circle cx="744.8" cy="467.0" r="2.3" fill="#63654f" stroke="#739548" stroke-width="1.2" />
<circle cx="744.8" cy="467.0" r="0.9" fill="#55753a" />
<circle cx="769.0" cy="460.8" r="3.6" fill="#57564f" opacity="0.85"/>
<circle cx="769.0" cy="460.8" r="2.3" fill="#63654f" stroke="#739548" stroke-width="1.2" />
<circle cx="769.0" cy="460.8" r="0.9" fill="#55753a" />
<circle cx="849.7" cy="441.4" r="3.6" fill="#57564f" opacity="0.85"/>
<circle cx="849.7" cy="441.4" r="2.3" fill="#63654f" stroke="#739548" stroke-width="1.2" />
<circle cx="849.7" cy="441.4" r="0.9" fill="#55753a" />
<circle cx="856.4" cy="437.0" r="3.6" fill="#57564f" opacity="0.85"/>
<circle cx="856.4" cy="437.0" r="2.3" fill="#63654f" stroke="#739548" stroke-width="1.2" />
<circle cx="856.4" cy="437.0" r="0.9" fill="#55753a" />
<circle cx="861.2" cy="517.6" r="3.6" fill="#57564f" opacity="0.85"/>
<circle cx="861.2" cy="517.6" r="2.3" fill="#63654f" stroke="#739548" stroke-width="1.2" />
<circle cx="861.2" cy="517.6" r="0.9" fill="#55753a" />
<circle cx="915.0" cy="543.5" r="3.6" fill="#57564f" opacity="0.85"/>
<circle cx="915.0" cy="543.5" r="2.3" fill="#63654f" stroke="#739548" stroke-width="1.2" />
<circle cx="915.0" cy="543.5" r="0.9" fill="#55753a" />
<circle cx="968.6" cy="569.6" r="3.6" fill="#57564f" opacity="0.85"/>
<circle cx="968.6" cy="569.6" r="2.3" fill="#63654f" stroke="#739548" stroke-width="1.2" />
<circle cx="968.6" cy="569.6" r="0.9" fill="#55753a" />
<circle cx="1014.3" cy="567.0" r="3.6" fill="#57564f" opacity="0.85"/>
<circle cx="1014.3" cy="567.0" r="2.3" fill="#63654f" stroke="#739548" stroke-width="1.2" />
<circle cx="1014.3" cy="567.0" r="0.9" fill="#55753a" />
<circle cx="1058.1" cy="534.7" r="3.6" fill="#57564f" opacity="0.85"/>
<circle cx="1058.1" cy="534.7" r="2.3" fill="#63654f" stroke="#739548" stroke-width="1.2" />
<circle cx="1058.1" cy="534.7" r="0.9" fill="#55753a" />
<circle cx="1081.2" cy="612.3" r="3.6" fill="#57564f" opacity="0.85"/>
<circle cx="1081.2" cy="612.3" r="2.3" fill="#63654f" stroke="#739548" stroke-width="1.2" />
<circle cx="1081.2" cy="612.3" r="0.9" fill="#55753a" />
<circle cx="1051.2" cy="651.3" r="3.6" fill="#57564f" opacity="0.85"/>
<circle cx="1051.2" cy="651.3" r="2.3" fill="#63654f" stroke="#739548" stroke-width="1.2" />
<circle cx="1051.2" cy="651.3" r="0.9" fill="#55753a" />
<circle cx="1065.0" cy="683.8" r="3.6" fill="#57564f" opacity="0.85"/>
<circle cx="1065.0" cy="683.8" r="2.3" fill="#63654f" stroke="#739548" stroke-width="1.2" />
<circle cx="1065.0" cy="683.8" r="0.9" fill="#55753a" />
<circle cx="625.9" cy="504.4" r="3.7" fill="#cfd0cc" opacity="0.75"/>
<circle cx="625.9" cy="504.4" r="2.3" fill="#8fae5e" stroke="#6a9a30" stroke-width="1.5" />
<circle cx="625.9" cy="504.4" r="0.9" fill="#0a0a0a" />
<circle cx="668.8" cy="542.6" r="3.7" fill="#cfd0cc" opacity="0.75"/>
<circle cx="668.8" cy="542.6" r="2.3" fill="#8fae5e" stroke="#6a9a30" stroke-width="1.5" />
<circle cx="668.8" cy="542.6" r="0.9" fill="#0a0a0a" />
<circle cx="672.6" cy="545.6" r="3.7" fill="#cfd0cc" opacity="0.75"/>
<circle cx="672.6" cy="545.6" r="2.3" fill="#8fae5e" stroke="#6a9a30" stroke-width="1.5" />
<circle cx="672.6" cy="545.6" r="0.9" fill="#0a0a0a" />
<circle cx="818.0" cy="615.9" r="3.7" fill="#cfd0cc" opacity="0.75"/>
<circle cx="818.0" cy="615.9" r="2.3" fill="#8fae5e" stroke="#6a9a30" stroke-width="1.5" />
<circle cx="818.0" cy="615.9" r="0.9" fill="#0a0a0a" />
<circle cx="963.0" cy="685.4" r="3.7" fill="#cfd0cc" opacity="0.75"/>
<circle cx="963.0" cy="685.4" r="2.3" fill="#8fae5e" stroke="#6a9a30" stroke-width="1.5" />
<circle cx="963.0" cy="685.4" r="0.9" fill="#0a0a0a" />
<circle cx="968.6" cy="688.4" r="3.7" fill="#cfd0cc" opacity="0.75"/>
<circle cx="968.6" cy="688.4" r="2.3" fill="#8fae5e" stroke="#6a9a30" stroke-width="1.5" />
<circle cx="968.6" cy="688.4" r="0.9" fill="#0a0a0a" />
<circle cx="1039.9" cy="704.4" r="3.7" fill="#cfd0cc" opacity="0.75"/>
<circle cx="1039.9" cy="704.4" r="2.3" fill="#8fae5e" stroke="#6a9a30" stroke-width="1.5" />
<circle cx="1039.9" cy="704.4" r="0.9" fill="#0a0a0a" />
<circle cx="857.0" cy="490.8" r="3.7" fill="#cfd0cc" opacity="0.75"/>
<circle cx="857.0" cy="490.8" r="2.3" fill="#8fae5e" stroke="#6a9a30" stroke-width="1.5" />
<circle cx="857.0" cy="490.8" r="0.9" fill="#0a0a0a" />
<circle cx="900.8" cy="458.7" r="3.7" fill="#cfd0cc" opacity="0.75"/>
<circle cx="900.8" cy="458.7" r="2.3" fill="#8fae5e" stroke="#6a9a30" stroke-width="1.5" />
<circle cx="900.8" cy="458.7" r="0.9" fill="#0a0a0a" />
<circle cx="1096.2" cy="560.8" r="3.7" fill="#cfd0cc" opacity="0.75"/>
<circle cx="1096.2" cy="560.8" r="2.3" fill="#8fae5e" stroke="#6a9a30" stroke-width="1.5" />
<circle cx="1096.2" cy="560.8" r="0.9" fill="#0a0a0a" />
<circle cx="1102.5" cy="555.7" r="3.7" fill="#cfd0cc" opacity="0.75"/>
<circle cx="1102.5" cy="555.7" r="2.3" fill="#8fae5e" stroke="#6a9a30" stroke-width="1.5" />
<circle cx="1102.5" cy="555.7" r="0.9" fill="#0a0a0a" />
<circle cx="1075.9" cy="627.7" r="3.7" fill="#cfd0cc" opacity="0.75"/>
<circle cx="1075.9" cy="627.7" r="2.3" fill="#8fae5e" stroke="#6a9a30" stroke-width="1.5" />
<circle cx="1075.9" cy="627.7" r="0.9" fill="#0a0a0a" />
<circle cx="1066.2" cy="635.1" r="3.7" fill="#cfd0cc" opacity="0.75"/>
<circle cx="1066.2" cy="635.1" r="2.3" fill="#8fae5e" stroke="#6a9a30" stroke-width="1.5" />
<circle cx="1066.2" cy="635.1" r="0.9" fill="#0a0a0a" />
<circle cx="780.5" cy="408.3" r="4.2" fill="none" stroke="#94cb5a" stroke-width="1.9" />
<circle cx="683.6" cy="450.4" r="4.2" fill="none" stroke="#94cb5a" stroke-width="1.9" />
<circle cx="713.0" cy="462.5" r="4.2" fill="none" stroke="#94cb5a" stroke-width="1.9" />
<circle cx="881.8" cy="502.7" r="4.2" fill="none" stroke="#94cb5a" stroke-width="1.9" />
<circle cx="988.9" cy="554.6" r="4.2" fill="none" stroke="#94cb5a" stroke-width="1.9" />
<circle cx="1165.5" cy="594.3" r="4.2" fill="none" stroke="#94cb5a" stroke-width="1.9" />
<circle cx="1090.5" cy="645.0" r="4.2" fill="none" stroke="#94cb5a" stroke-width="1.9" />
<circle cx="1116.3" cy="659.6" r="4.2" fill="none" stroke="#94cb5a" stroke-width="1.9" />
<circle cx="1058.0" cy="646.7" r="4.2" fill="none" stroke="#94cb5a" stroke-width="1.9" />
</svg>
<svg class="ov" width="1920" height="1040" viewBox="0 0 1920 1040">
<defs><radialGradient id="vs" cx="0.5" cy="0.5" r="0.5"><stop offset="0" stop-color="#000" stop-opacity="0.22"/><stop offset="0.6" stop-color="#000" stop-opacity="0.08"/><stop offset="1" stop-color="#000" stop-opacity="0"/></radialGradient></defs>
<ellipse cx="1858.0" cy="234.0" rx="46" ry="26" fill="url(#vs)" />
<polygon points="1853.8,166.9 1890.0,181.2 1860.6,203.8 1821.2,185.6" fill="#f1f1f1" />
<polygon points="1821.2,185.6 1860.6,203.8 1860.6,243.1 1825.0,223.8" fill="#ececec" />
<polygon points="1860.6,203.8 1890.0,181.2 1887.5,219.4 1860.6,243.1" fill="#e6e6e6" />
<polyline points="1821.2,185.6 1853.8,166.9 1890.0,181.2" fill="none" stroke="#6e6e6e" stroke-width="0.8" stroke-dasharray="4 1.6"/>
<polyline points="1821.2,185.6 1860.6,203.8 1890.0,181.2" fill="none" stroke="#6e6e6e" stroke-width="0.8" stroke-dasharray="4 1.6"/>
<polyline points="1860.6,203.8 1860.6,243.1" fill="none" stroke="#6e6e6e" stroke-width="0.8" stroke-dasharray="4 1.6"/>
<polyline points="1890.0,181.2 1887.5,219.4 1860.6,243.1" fill="none" stroke="#6e6e6e" stroke-width="0.8" stroke-dasharray="4 1.6"/>
<circle cx="1860.0" cy="202.6" r="6.6" fill="#e2e6ec" opacity="0.8"/>
<line x1="1819.6" y1="178.8" x2="1825.0" y2="223.8" stroke="#5656f0" stroke-width="2.4" />
<line x1="1825.0" y1="224.4" x2="1866.9" y2="248.8" stroke="#f29a9a" stroke-width="2.4" />
<text x="1818.2" y="175.6" font-family="Liberation Sans, Noto Sans CJK JP, sans-serif" font-size="13.5" fill="#6f6ff6" text-anchor="middle" transform="translate(1818.2 0) scale(0.82 1) translate(-1818.2 0)">Z</text>
<text x="1872.6" y="257.6" font-family="Liberation Sans, Noto Sans CJK JP, sans-serif" font-size="13.5" fill="#f28a8a" text-anchor="middle" transform="translate(1872.6 0) scale(0.82 1) translate(-1872.6 0)">X</text>
<text font-family="Liberation Sans, Noto Sans CJK JP, sans-serif" font-size="23" fill="#9aa0a6" text-anchor="middle" transform="matrix(1.1 0.51 0 0.83 1840.3 221.4)">前</text>
<text font-family="Liberation Sans, Noto Sans CJK JP, sans-serif" font-size="24" fill="#9aa0a6" text-anchor="middle" transform="matrix(0.81 -0.62 0 0.77 1875.6 218.9)">右</text>
<text font-family="Liberation Sans, Noto Sans CJK JP, sans-serif" font-size="27.5" fill="#9aa0a6" text-anchor="middle" transform="matrix(0.636 0.293 -0.607 0.349 1847.06 189.55)">上</text>
</svg>
<svg class="ov" width="1920" height="1040" viewBox="0 0 1920 1040">
<rect x="12.0" y="65.9" width="109.1" height="60.0" rx="5" fill="none" stroke="#dcdcdc" stroke-width="1.5" />
<defs><linearGradient id="lg1" x1="0" y1="0" x2="1" y2="1"><stop offset="0" stop-color="#ff8a1e"/><stop offset="1" stop-color="#f05a00"/></linearGradient></defs>
<rect x="3.2" y="3.2" width="13.6" height="15.6" rx="2" fill="url(#lg1)" />
<path d="M3.2 14.2 H16.8 V16.8 a2 2 0 0 1 -2 2 H5.2 a2 2 0 0 1 -2 -2 Z" fill="#a33a08" />
<path d="M8.6 6 H13 V7.5 H10.3 V9 H12.6 V10.4 H10.3 V13 H8.6 Z" fill="#fff" />
<rect x="8.0" y="15.6" width="4.4" height="1.4" rx="0" fill="#e9c2a8" />
<line x1="1799.0" y1="10.5" x2="1809.0" y2="10.5" stroke="#111" stroke-width="1" />
<rect x="1844.5" y="7.5" width="7.0" height="7.0" rx="1" fill="none" stroke="#111" stroke-width="1" />
<path d="M1846.5 7.5 V5.5 H1853.5 V12.5 H1851.5" fill="none" stroke="#111" stroke-width="1" />
<path d="M1890 5 L1900 15 M1900 5 L1890 15" fill="none" stroke="#111" stroke-width="1.1" />
<rect x="9.0" y="32.0" width="4.0" height="4.0" rx="0.6" fill="#666" />
<rect x="9.0" y="37.0" width="4.0" height="4.0" rx="0.6" fill="#666" />
<rect x="9.0" y="42.0" width="4.0" height="4.0" rx="0.6" fill="#666" />
<rect x="14.0" y="32.0" width="4.0" height="4.0" rx="0.6" fill="#666" />
<rect x="14.0" y="37.0" width="4.0" height="4.0" rx="0.6" fill="#666" />
<rect x="14.0" y="42.0" width="4.0" height="4.0" rx="0.6" fill="#666" />
<rect x="19.0" y="32.0" width="4.0" height="4.0" rx="0.6" fill="#666" />
<rect x="19.0" y="37.0" width="4.0" height="4.0" rx="0.6" fill="#666" />
<rect x="19.0" y="42.0" width="4.0" height="4.0" rx="0.6" fill="#666" />
<path d="M42.5 31.5 H50.5 L55 36 V46.5 H42.5 Z" fill="#666" />
<path d="M51 31.5 V35.6 H55" fill="none" stroke="#ccc" stroke-width="0.9" />
<polygon points="61.2,36.1 67.8,36.1 64.5,40.3" fill="#666" />
<path d="M87.5 32.5 H98.8 L101 34.7 V45.8 H87.5 Z" fill="#666" />
<rect x="90.2" y="33.6" width="7.0" height="4.0" rx="0" fill="#ccc" />
<rect x="90.6" y="40.6" width="7.2" height="5.2" rx="0" fill="#ccc" />
<rect x="92.6" y="42.4" width="3.2" height="3.4" rx="0" fill="#666" />
<path d="M126.5 33.8 L121.2 38 L126.5 42.2 M121.8 38 H127.5 C131 38 132.4 40.6 132.4 44.6" fill="none" stroke="#666" stroke-width="1.9" stroke-linecap="round" stroke-linejoin="round"/>
<polygon points="140.2,36.1 146.8,36.1 143.5,40.3" fill="#666" />
<path d="M166.5 33.8 L171.8 38 L166.5 42.2 M171.2 38 H165.5 C162 38 160.6 40.6 160.6 44.6" fill="none" stroke="#999" stroke-width="1.9" stroke-linecap="round" stroke-linejoin="round"/>
<polygon points="179.2,36.1 185.8,36.1 182.5,40.3" fill="#999" />
<path d="M214 36.2 L221.5 43 H219.6 V49 H215.6 V45.2 H212.6 V49 H208.4 V43 H206.5 Z" fill="#8a8a8a" />
<rect x="217.6" y="37.0" width="1.6" height="3.0" rx="0" fill="#8a8a8a" />
<polygon points="921.0,35.0 928.0,38.3 921.0,41.6 914.0,38.3" fill="#ffa64a" />
<polygon points="914.0,38.3 921.0,41.6 921.0,49.6 914.0,46.2" fill="#f07818" />
<polygon points="928.0,38.3 921.0,41.6 921.0,49.6 928.0,46.2" fill="#d85a00" />
<path d="M1692 37 L1700 45 M1700 37 L1692 45" fill="none" stroke="#666" stroke-width="1.2" />
<path d="M1719 40.5 H1732 M1725.5 34 V47" fill="none" stroke="#666" stroke-width="2.4" />
<path d="M1752.9 42.6 A6.6 6.6 0 1 1 1756 45.2" fill="none" stroke="#666" stroke-width="2.3" stroke-linecap="butt"/>
<path d="M1756.4 38.4 L1760.6 34.4 L1764.2 38 L1760 42 C1758.6 43.2 1757 43 1756 42 C1755 41 1755 39.6 1756.4 38.4 Z" fill="#666" />
<path d="M1756 42 L1752.6 45.6" fill="none" stroke="#666" stroke-width="2" />
<path d="M1760 33.6 l2.2 -2 M1763.6 37.2 l2.2 -2" fill="none" stroke="#666" stroke-width="1.4" />
<circle cx="1791.9" cy="39.0" r="7.6" fill="none" stroke="#666" stroke-width="1" />
<circle cx="1791.9" cy="39.0" r="6" fill="#666" />
<path d="M1792 34.8 V39.6 H1795.6" fill="none" stroke="#ccc" stroke-width="1.4" />
<path d="M1825 31.5 c-0.8 0 -1.3 0.6 -1.3 1.4 c-2.6 0.8 -3.8 3 -3.8 5.8 c0 3 -0.6 4.4 -2.2 5.6 h14.6 c-1.6 -1.2 -2.2 -2.6 -2.2 -5.6 c0 -2.8 -1.2 -5 -3.8 -5.8 c0 -0.8 -0.5 -1.4 -1.3 -1.4 Z" fill="#666" />
<path d="M1823 45.6 h4 a2 2 0 0 1 -4 0 Z" fill="#666" />
<circle cx="1829.4" cy="34.8" r="2.9" fill="#1a9be8" />
<circle cx="1858.1" cy="39.0" r="8" fill="#666" />
<text x="1858.1" y="43.6" font-family="Liberation Sans, sans-serif" font-size="13" font-weight="700" fill="#ccc" text-anchor="middle">?</text>
<defs><clipPath id="av"><circle cx="1897.1" cy="38.8" r="12"/></clipPath></defs>
<g clip-path="url(#av)"><rect x="1885.0" y="26.0" width="25.0" height="26.0" rx="0" fill="#3b3431" /><rect x="1885.0" y="26.0" width="8.0" height="14.0" rx="0" fill="#5a4a40" /><ellipse cx="1897.5" cy="47.5" rx="9.5" ry="8" fill="#d9dbdc" /><ellipse cx="1896.5" cy="37.5" rx="3.4" ry="4.2" fill="#caa58c" /><path d="M1892.6 35 q4 -4.4 8 -0.6 l0.6 -2.6 q-5 -3 -9.4 0.6 Z" fill="#2a2a2e" /><path d="M1901 40 L1894 52" fill="none" stroke="#7a4a2a" stroke-width="1.6" /></g>
<polygon points="396.4,124.8 403.0,124.8 399.7,128.8" fill="#222" />
<polygon points="699.3,124.8 705.9,124.8 702.6,128.8" fill="#222" />
<polygon points="969.2,124.8 975.8,124.8 972.5,128.8" fill="#222" />
<polygon points="1313.2,124.8 1319.8,124.8 1316.5,128.8" fill="#fff" />
<polygon points="1490.2,124.8 1496.8,124.8 1493.5,128.8" fill="#222" />
<polygon points="1611.5,124.8 1618.1,124.8 1614.8,128.8" fill="#222" />
<polygon points="1733.3,124.8 1739.9,124.8 1736.6,128.8" fill="#222" />
<polygon points="1809.1,124.8 1815.7,124.8 1812.4,128.8" fill="#222" />
<polygon points="1888.7,124.8 1895.3,124.8 1892.0,128.8" fill="#222" />
<polygon points="84.7,94.0 91.3,94.0 88.0,97.9" fill="#222" />
<polyline points="140.5,83.5 163.5,83.5" fill="none" stroke="#4a4a4a" stroke-width="1" />
<polyline points="138.3,86.0 138.3,108.5" fill="none" stroke="#4a4a4a" stroke-width="1" />
<polyline points="165.5,86.0 165.5,100.0" fill="none" stroke="#4a4a4a" stroke-width="1" />
<polyline points="140.5,110.3 155.0,110.3" fill="none" stroke="#4a4a4a" stroke-width="1" />
<rect x="137.0" y="82.2" width="2.6" height="2.6" rx="0" fill="#4a4a4a" />
<rect x="164.2" y="82.2" width="2.6" height="2.6" rx="0" fill="#4a4a4a" />
<rect x="137.0" y="109.0" width="2.6" height="2.6" rx="0" fill="#4a4a4a" />
<rect x="144.0" y="88.9" width="2.6" height="2.6" rx="0" fill="#4a4a4a" />
<rect x="157.3" y="88.9" width="2.6" height="2.6" rx="0" fill="#4a4a4a" />
<rect x="144.0" y="102.3" width="2.6" height="2.6" rx="0" fill="#4a4a4a" />
<polyline points="147.5,90.2 156.3,90.2" fill="none" stroke="#4a4a4a" stroke-width="1" />
<polyline points="145.3,92.4 145.3,101.4" fill="none" stroke="#4a4a4a" stroke-width="1" />
<path d="M158.6 92.4 C158.4 98 154 102.6 147.6 103.6" fill="none" stroke="#4a4a4a" stroke-width="1" />
<path d="M160 100.2 H164 V105 H168.8 V109 H164 V113.6 H160 V109 H155.2 V105 H160 Z" fill="#1fa54a" />
<path d="M180 96.5 C188 87 204 87 212 96.5 L212 104 L206 110.4 C200 105 192 105 186 110.8 L180 104.5 Z" fill="#6aaee4" />
<path d="M180 96.5 C188 87 204 87 212 96.5 L206.5 103 C200.5 96 191.5 96 186 102.6 Z" fill="#8ccafa" />
<path d="M180 96.5 L186 102.6 V110.8 L180 104.5 Z" fill="#4a92cc" />
<polygon points="206.3,102.8 212.0,96.3 212.0,104.3 206.3,110.6" fill="#f4f4f4" stroke="#4a4a4a" stroke-width="1" />
<path d="M210 89.5 C203 82.5 190 82.3 182 88.6" fill="none" stroke="#222" stroke-width="1" />
<polygon points="180.4,90.0 185.6,86.0 184.3,90.6" fill="#222" />
<polygon points="224.0,108.8 242.3,108.8 248.0,103.6 248.0,108.4 242.3,113.6 224.0,113.6" fill="#c4c4c4" />
<rect x="224.0" y="88.0" width="18.3" height="20.8" rx="0" fill="#6aaee4" />
<polygon points="224.0,88.0 229.8,82.2 248.0,82.2 242.3,88.0" fill="#8ccafa" />
<polygon points="242.3,88.0 248.0,82.2 248.0,103.6 242.3,108.8" fill="#4a92cc" />
<line x1="251.6" y1="86.0" x2="251.6" y2="108.0" stroke="#222" stroke-width="1" />
<polygon points="251.6,82.6 254.2,87.6 249.0,87.6" fill="#222" />
<rect x="266.5" y="89.5" width="24.0" height="23.6" rx="0" fill="#dcdcdc" />
<polygon points="266.5,89.5 273.8,82.5 297.5,82.5 290.5,89.5" fill="#f6f6f6" />
<polygon points="290.5,89.5 297.5,82.5 297.5,106.0 290.5,113.1" fill="#bdbdbd" />
<path d="M266.5 89.5 L273.8 82.5 H297.5 V106 L290.5 113.1 H266.5 Z" fill="none" stroke="#5a5a5a" stroke-width="1.1" stroke-linejoin="round"/>
<circle cx="279.5" cy="100.4" r="8" fill="#f4f4f4" stroke="#5a5a5a" stroke-width="1" />
<circle cx="279.5" cy="100.4" r="6.3" fill="#6aaee4" />
<path d="M278.2 94.2 a6.3 6.3 0 0 1 7.5 7.4 a6.4 6.4 0 0 1 -7.5 -7.4 Z" fill="#f4f4f4" />
<path d="M318 83 H326.8 V89.6 H336 Q340 89.8 340 93 V104.6 L333.4 112.3 V99.9 H320.2 V104.5 H314 Q310 104 310 100 V92 Q310.4 89.6 312.6 88 Z" fill="#6aaee4" />
<path d="M318 83 H326.8 L320.6 89.4 H336 Q340 89.8 340 93 L333.4 99.9 H320.2 L326 93.2 H310.4 Q310.8 90 312.6 88 Z" fill="#8ccafa" />
<polygon points="326.8,83.0 326.8,89.6 320.6,89.4" fill="#4a92cc" />
<polygon points="333.4,99.9 340.0,93.0 340.0,104.6 333.4,112.3" fill="#4a92cc" />
<rect x="320.5" y="100.2" width="12.6" height="11.8" rx="0" fill="#f4f4f4" stroke="#6a6a6a" stroke-width="1.2" />
<line x1="332.6" y1="100.0" x2="332.6" y2="112.0" stroke="#aaa" stroke-width="1.4" />
<polygon points="352.0,82.0 384.0,82.0 384.0,102.6 378.0,107.0 358.0,107.0 352.0,102.6" fill="#4a92cc" />
<polygon points="352.0,82.0 384.0,82.0 374.0,101.0 362.0,101.0" fill="#8ccafa" />
<polygon points="352.0,82.0 362.0,101.0 358.0,107.0 352.0,102.6" fill="#4a92cc" />
<polygon points="353.0,82.0 362.5,99.5 364.0,97.0" fill="#b4dcfb" />
<polygon points="383.0,82.0 373.5,99.5 372.0,97.0" fill="#b4dcfb" />
<circle cx="368.0" cy="104.8" r="8.9" fill="#f4f4f4" stroke="#5a5a5a" stroke-width="1.1" />
<polygon points="396.3,112.0 409.4,112.0 409.4,85.5" fill="#f4f4f4" stroke="#5a5a5a" stroke-width="1.1" />
<polygon points="411.4,84.0 411.4,112.5 425.5,112.5" fill="#6aaee4" />
<line x1="446.0" y1="87.4" x2="458.0" y2="87.4" stroke="#5a5a5a" stroke-width="1.1" />
<line x1="441.6" y1="92.0" x2="441.6" y2="104.0" stroke="#5a5a5a" stroke-width="1.1" />
<line x1="446.4" y1="108.5" x2="458.0" y2="108.5" stroke="#5a5a5a" stroke-width="1.1" />
<rect x="438.8" y="84.6" width="5.8" height="5.8" rx="0" fill="#f8f8f8" stroke="#5a5a5a" stroke-width="1.1" />
<rect x="459.2" y="84.2" width="6.6" height="6.6" rx="0" fill="#6aaee4" />
<rect x="438.4" y="105.2" width="6.6" height="6.7" rx="0" fill="#6aaee4" />
<rect x="459.2" y="105.2" width="6.6" height="6.7" rx="0" fill="#6aaee4" />
<circle cx="484.8" cy="98.8" r="3.4" fill="#f8f8f8" stroke="#5a5a5a" stroke-width="1.1" />
<circle cx="497.0" cy="96.8" r="4" fill="#6aaee4" />
<circle cx="509.0" cy="90.9" r="4" fill="#6aaee4" />
<path d="M481 105.2 C488 108.6 496 108 502 103.4 C506 100.2 509 98.6 512.7 98.3" fill="none" stroke="#5a5a5a" stroke-width="1.1" />
<circle cx="528.0" cy="92.1" r="3.4" fill="#f8f8f8" stroke="#5a5a5a" stroke-width="1.1" />
<circle cx="538.0" cy="85.9" r="4" fill="#6aaee4" />
<circle cx="548.0" cy="91.9" r="4" fill="#6aaee4" />
<circle cx="548.0" cy="103.0" r="4" fill="#6aaee4" />
<circle cx="538.0" cy="108.9" r="4" fill="#6aaee4" />
<circle cx="528.0" cy="103.0" r="4" fill="#6aaee4" />
<path d="M568.5 97.3 L582.2 102.2 C588 97 592 92.6 597.7 92 V98.6 C592 99.4 588 104 582.2 109.6 L568.5 103.9 Z" fill="#6aaee4" />
<path d="M582.2 102.2 C588 97 592 92.6 597.7 92 V98.6 C592 99.4 588 104 582.2 109.6 Z" fill="#4a92cc" />
<path d="M569.4 96.5 C575 92.6 579 88.6 583.6 85.7 C588 86.2 592 88 596 90.2 C590 92 586 97 582.2 101.7 Z" fill="#f6f6f6" stroke="#4a4a4a" stroke-width="1" />
<path d="M618 84.4 H630 Q640 86 640 96 V104 Q640 110 634 113.4 H620 Q610 112 610 102 V92 Q610.5 86 618 84.4 Z" fill="#c9adf7" stroke="#8e62c8" stroke-width="1" />
<path d="M612 95 Q612 92.6 615 92.6 H631.5 V112 H618 Q612 111 612 104 Z" fill="#a984e8" />
<path d="M633 99.5 L638.6 96 V104 Q638.4 108 633 111.4 Z" fill="#9a70d8" />
<path d="M617 85.6 H628.6 Q630 88 627 90.6 H613.4 Q614 86.6 617 85.6 Z" fill="#bfa0f2" />
<path d="M621.6 84.6 V112.6 M611 101.8 H632 M632 92 V112.8" fill="none" stroke="#8e62c8" stroke-width="0.9" />
<polygon points="633.6,82.2 634.9,87.2 639.3,84.5 636.6,88.9 641.6,90.2 636.6,91.5 639.3,95.9 634.9,93.2 633.6,98.2 632.3,93.2 627.9,95.9 630.6,91.5 625.6,90.2 630.6,88.9 627.9,84.5 632.3,87.2" fill="#ffa400" />
<path d="M676 87 C680 92.6 686 93.8 694.6 90.4 L697.6 93 C691 95.6 689.6 99 689.6 104.6 L685.2 106 L680.8 104.6 C681.4 99 679 94.6 673.4 90 Z" fill="#5a9fd8" />
<polygon points="682.8,95.6 689.0,95.2 685.3,103.0" fill="#f2f2f2" />
<circle cx="685.2" cy="108.6" r="6" fill="#5a9fd8" />
<circle cx="685.2" cy="108.6" r="4.3" fill="#f4f4f4" stroke="#555" stroke-width="1.1" />
<circle cx="685.2" cy="108.6" r="1.5" fill="none" stroke="#777" stroke-width="0.8" />
<circle cx="697.6" cy="89.0" r="5.6" fill="#5a9fd8" />
<rect x="671.4" y="82.6" width="6.8" height="6.2" rx="0" fill="#f8f8f8" stroke="#4a4a4a" stroke-width="1.1" />
<polygon points="697.4,84.3 702.6,89.8 698.6,93.6 693.6,91.6 693.4,86.4" fill="#f8f8f8" stroke="#4a4a4a" stroke-width="1.1" />
<path d="M734.6 87.6 L740 82.4 H746 V113.2 H734.6 Z" fill="#dcdcdc" stroke="#5a5a5a" stroke-width="1.1" />
<rect x="741.0" y="87.5" width="9.3" height="26.1" rx="0" fill="#6aaee4" />
<polygon points="741.0,87.5 747.2,82.2 756.0,82.2 750.3,87.5" fill="#8ccafa" />
<polygon points="750.3,87.5 756.0,82.2 756.0,107.4 750.3,113.6" fill="#4a92cc" />
<rect x="753.0" y="96.0" width="6.0" height="2.8" rx="0" fill="#f4f4f4" />
<line x1="753.8" y1="97.4" x2="760.0" y2="97.4" stroke="#222" stroke-width="1.1" />
<polygon points="763.4,97.4 758.8,94.8 758.8,100.0" fill="#222" />
<path d="M776.4 89.7 L783.3 82.6 H793 C801 83.6 807 89 808 96 V106.1 L800.1 113.4 H776.4 Z" fill="#dcdcdc" />
<path d="M776.4 89.7 L783.3 82.6 H793 L788.6 88.6 Z" fill="#f6f6f6" />
<path d="M788.6 88.4 L793.6 82.5 C801.4 83.6 807.2 89 808 95.4 L801 102.4 C800.4 94.6 796 89.6 788.6 88.4 Z" fill="#6aaee4" />
<path d="M801 102.4 L808 95.4 V106.1 L800.1 113.4 Z" fill="#bdbdbd" />
<path d="M776.4 89.7 L783.3 82.6 H793 M808 96 V106.1 L800.1 113.4 H776.4 V89.7 M800.4 103 V113" fill="none" stroke="#5a5a5a" stroke-width="1.1" stroke-linejoin="round"/>
<path d="M819.3 89.7 L826.7 82.6 H836 L850.6 96.4 V106.1 L843.5 113.4 H819.3 Z" fill="#dcdcdc" />
<polygon points="819.3,89.7 826.7,82.6 836.0,82.6 830.2,89.7" fill="#f6f6f6" />
<polygon points="830.2,89.7 837.3,82.4 850.6,95.9 843.0,103.0" fill="#6aaee4" />
<polygon points="843.4,103.0 850.6,96.0 850.6,106.1 843.5,113.4" fill="#bdbdbd" />
<path d="M819.3 89.7 L826.7 82.6 H836 M850.6 96.4 V106.1 L843.5 113.4 H819.3 V89.7 M843.5 103.4 V113" fill="none" stroke="#5a5a5a" stroke-width="1.1" stroke-linejoin="round"/>
<rect x="862.3" y="89.7" width="23.7" height="23.7" rx="0" fill="#dcdcdc" />
<polygon points="862.3,89.7 869.4,82.6 893.4,82.6 886.0,89.7" fill="#f6f6f6" />
<polygon points="886.0,89.7 893.4,82.6 893.4,106.5 886.0,113.4" fill="#bdbdbd" />
<path d="M862.3 89.7 L869.4 82.6 H893.4 V106.5 L886 113.4 H862.3 Z" fill="none" stroke="#5a5a5a" stroke-width="1.1" stroke-linejoin="round"/>
<rect x="865.2" y="92.8" width="17.7" height="17.3" rx="0" fill="#f2f2f2" />
<polygon points="866.5,94.2 873.6,94.2 873.6,102.1 866.5,108.8" fill="#4a92cc" />
<polygon points="873.6,102.1 882.0,102.1 882.0,109.6 866.5,109.6 866.5,108.8" fill="#8ccafa" />
<path d="M906.6 91.9 L913.9 84.6 H922.3 L925 110.3 H906.6 Z" fill="#dcdcdc" />
<polygon points="906.6,91.9 913.9,84.6 922.3,84.6 915.2,91.9" fill="#f6f6f6" />
<path d="M922.3 84.6 H913.9 L906.6 91.9 V110.3 H925" fill="none" stroke="#5a5a5a" stroke-width="1.1" stroke-linejoin="round"/>
<polygon points="915.2,91.9 922.8,84.4 933.0,102.6 925.4,110.5" fill="#6aaee4" />
<line x1="935.4" y1="101.4" x2="928.4" y2="87.0" stroke="#222" stroke-width="1" />
<polygon points="927.0,84.2 931.6,87.6 927.2,89.6" fill="#222" />
<rect x="958.2" y="86.2" width="18.1" height="17.2" rx="0" fill="#6aaee4" />
<polygon points="958.2,86.2 962.4,82.2 979.8,82.2 976.3,86.2" fill="#8ccafa" />
<polygon points="976.3,86.2 979.8,82.2 979.8,99.6 976.3,103.4" fill="#4a92cc" />
<rect x="948.0" y="96.4" width="18.1" height="17.2" rx="0" fill="#6aaee4" />
<polygon points="948.0,96.4 951.6,92.4 958.2,92.4 958.2,96.4" fill="#8ccafa" />
<polygon points="966.1,103.4 970.1,103.4 970.1,109.6 966.1,113.6" fill="#4a92cc" />
<rect x="993.1" y="103.0" width="22.2" height="9.3" rx="0" fill="#dcdcdc" />
<polygon points="1015.3,103.0 1021.0,97.6 1021.0,106.6 1015.3,112.3" fill="#bdbdbd" />
<path d="M993.1 103 V112.3 H1015.3 L1021 106.6 V98" fill="none" stroke="#5a5a5a" stroke-width="1.1" stroke-linejoin="round"/>
<polyline points="990.6,100.3 1015.3,100.3 1023.0,92.2" fill="none" stroke="#fafafa" stroke-width="3.2" />
<rect x="993.1" y="88.0" width="22.2" height="9.7" rx="0" fill="#6aaee4" />
<polygon points="993.1,88.0 999.0,82.2 1021.0,82.2 1015.3,88.0" fill="#8ccafa" />
<polygon points="1015.3,88.0 1021.0,82.2 1021.0,91.8 1015.3,97.7" fill="#4a92cc" />
<polyline points="990.9,100.3 1015.3,100.3 1022.8,92.4" fill="none" stroke="#1e8ce6" stroke-width="1.2" />
<rect x="1036.1" y="82.2" width="23.9" height="14.6" rx="0" fill="#6aaee4" />
<path d="M1036.6 100 V111.8 H1059.5 V100" fill="none" stroke="#5a5a5a" stroke-width="1.1" />
<line x1="1034.0" y1="98.4" x2="1062.0" y2="98.4" stroke="#1e8ce6" stroke-width="1.3" />
<polygon points="1088.6,86.4 1093.2,82.2 1108.7,82.2 1104.2,86.4" fill="#8ccafa" />
<polygon points="1104.2,86.4 1108.7,82.2 1108.7,98.1 1104.2,102.6" fill="#4a92cc" />
<rect x="1077.7" y="88.7" width="24.5" height="24.4" rx="0" fill="#f4f4f4" stroke="#5a5a5a" stroke-width="1.2" />
<polygon points="1082.6,93.3 1086.1,90.2 1100.7,90.2 1097.6,93.3" fill="#8ccafa" />
<polygon points="1097.6,93.3 1100.7,90.2 1100.7,105.2 1097.6,108.3" fill="#4a92cc" />
<rect x="1083.1" y="93.8" width="14.0" height="14.0" rx="0" fill="#f4f4f4" stroke="#5a5a5a" stroke-width="1.2" />
<path d="M1124.2 104.8 V89.6 C1131 83 1140 83 1146.7 89.6 V104.8 Z" fill="#6aaee4" />
<path d="M1120.2 88.4 C1129 80 1142 80 1150.7 88.4" fill="none" stroke="#e8823a" stroke-width="1.1" />
<rect x="1124.7" y="106.6" width="21.5" height="6.5" rx="0" fill="#f6f6f6" stroke="#5a5a5a" stroke-width="1.1" />
<path d="M1135.5 89.5 L1141.5 99.5 H1137.2 V105 H1133.8 V99.5 H1129.5 Z" fill="#f4f4f4" />
<line x1="1135.5" y1="105.0" x2="1135.5" y2="97.0" stroke="#222" stroke-width="1.3" />
<polygon points="1135.5,91.4 1139.4,98.2 1131.6,98.2" fill="#222" />
<line x1="1169.0" y1="97.7" x2="1189.0" y2="97.7" stroke="#3a3a3a" stroke-width="2.6" />
<line x1="1178.9" y1="88.0" x2="1178.9" y2="108.0" stroke="#3a3a3a" stroke-width="2.6" />
<polygon points="1163.4,97.7 1171.0,92.8 1171.0,102.6" fill="#3a3a3a" />
<polygon points="1194.8,97.7 1187.0,92.8 1187.0,102.6" fill="#3a3a3a" />
<polygon points="1178.9,82.4 1174.0,90.0 1183.8,90.0" fill="#3a3a3a" />
<polygon points="1178.9,113.4 1174.0,105.6 1183.8,105.6" fill="#3a3a3a" />
<defs><linearGradient id="hgL" x1="0" y1="0" x2="1" y2="0"><stop offset="0" stop-color="#c6c6c6"/><stop offset="1" stop-color="#e6e6e6"/></linearGradient><linearGradient id="hgR" x1="0" y1="0" x2="1" y2="0"><stop offset="0" stop-color="#d4d4d4"/><stop offset="1" stop-color="#e8e8e8"/></linearGradient></defs>
<path d="M1217.25 113.4 V97.25 L1220.3 92.4 C1221.6 91.4 1223 91.1 1224.7 91.1 C1226.4 91.1 1227.6 91.5 1228.6 92.2 L1232.3 97.25 V113.4 H1230.2 L1227.3 108.2 C1226 109.9 1223.8 109.9 1222.5 108.2 L1219.3 113.4 Z" fill="url(#hgL)" stroke="#646464" stroke-width="1.1" stroke-linejoin="round"/>
<path d="M1222.3 93.6 C1222.3 92.4 1227.3 92.4 1227.3 93.6 V101.2 C1226.4 102.6 1223.2 102.6 1222.3 101.2 Z" fill="#e4e4e4" />
<path d="M1222.5 102.2 C1223.4 103.4 1226.4 103.4 1227.3 102 V108.2 C1226 109.9 1223.8 109.9 1222.5 108.2 Z" fill="#bdbdbd" />
<path d="M1227.3 93.6 V101.2 C1226.4 102.6 1223.2 102.6 1222.4 101.4 V108 M1227.3 102 V108.2" fill="none" stroke="#646464" stroke-width="1" />
<ellipse cx="1224.7" cy="93.4" rx="1.5" ry="0.6" fill="#8a8a8a" />
<path d="M1235.4 88.3 H1237.4 L1240.7 93.3 V109.5 H1238.25 L1234.3 105.1 V98.6 L1235.4 97.25 Z" fill="url(#hgR)" stroke="#646464" stroke-width="1.1" stroke-linejoin="round"/>
<line x1="1233.4" y1="93.1" x2="1233.4" y2="96.8" stroke="#1e8ce6" stroke-width="1.4" />
<path d="M1243.3 82.2 H1245.25 L1248.5 87.2 V103.6 H1246.6 L1242.2 99 V92.4 L1243.3 91.1 Z" fill="url(#hgR)" stroke="#646464" stroke-width="1.1" stroke-linejoin="round"/>
<line x1="1241.5" y1="87.0" x2="1241.5" y2="92.7" stroke="#1e8ce6" stroke-width="1.6" />
<path d="M1262.3 110.8 V91.3 L1269.1 84.6 C1270 84 1271 83.9 1271.6 83.9 C1273 83.9 1274 84.4 1274.6 85.2 V95.5 C1273.6 96.8 1271.4 97 1269.75 96.4 V105.3 L1263.9 110.8 Z" fill="url(#hgL)" stroke="#646464" stroke-width="1.1" stroke-linejoin="round"/>
<path d="M1269.5 85.6 C1270.4 84.6 1273.6 84.6 1274.2 85.6 V95.3 C1273.2 96.4 1271 96.6 1269.9 96 Z" fill="#e6e6e6" />
<ellipse cx="1271.7" cy="86.0" rx="1.5" ry="0.6" fill="#8a8a8a" />
<line x1="1271.4" y1="97.0" x2="1271.4" y2="101.8" stroke="#1e8ce6" stroke-width="1.6" />
<path d="M1282.4 94.6 V87.4 L1283.75 86.3 L1289.65 92.2 V110.8 L1288.4 111.6 L1282.4 105.1 C1281 106 1278.6 106 1277.4 104.6 V94.6 C1278.4 93 1281.2 93 1282.4 94.6 Z" fill="url(#hgR)" stroke="#646464" stroke-width="1.1" stroke-linejoin="round"/>
<path d="M1277.6 95.2 C1278.6 96.6 1281.4 96.6 1282.4 95.2 V105.1 C1281 106 1278.6 106 1277.6 104.6 Z" fill="#c2c2c2" />
<path d="M1282.4 94.6 V105.1" fill="none" stroke="#646464" stroke-width="1" />
<line x1="1280.5" y1="90.0" x2="1280.5" y2="95.7" stroke="#1e8ce6" stroke-width="1.6" />
<path d="M1309.6 110.6 V92.6 L1316 85 C1317.6 84 1320.4 84 1321.4 85.4 L1327.4 92.4 V110.6 L1321.6 105.6 H1316.4 Z" fill="#cfcfcf" stroke="#646464" stroke-width="1" stroke-linejoin="round"/>
<path d="M1316.4 86.4 C1317.6 85.8 1320 85.8 1321 86.6 V95.6 C1320 96.6 1318 96.8 1316.4 96.6 Z" fill="#e6e6e6" />
<ellipse cx="1318.8" cy="85.8" rx="2.1" ry="0.8" fill="#f4f4f4" stroke="#888" stroke-width="0.6" />
<path d="M1321.4 86 L1327.4 92.4 V110.6 L1321.6 105.6 Z" fill="#e6e6e6" stroke="#646464" stroke-width="1" stroke-linejoin="round"/>
<path d="M1316.4 97 H1321.4 V105.4 H1316.4 Z" fill="#b4b4b4" />
<path d="M1316.4 97 V105.6 M1321.4 95.6 V105.6" fill="none" stroke="#646464" stroke-width="0.9" />
<path d="M1364.5 84.25 A13.7 13.7 0 1 0 1375.5 95.9 H1367.4 A5.8 5.8 0 1 1 1364.5 92.5 Z" fill="#f5f5f5" stroke="#6a6a6a" stroke-width="1.1" stroke-linejoin="round"/>
<path d="M1367.4 95.9 A5.8 5.8 0 0 0 1364.5 92.5" fill="none" stroke="#6a6a6a" stroke-width="1.1" />
<line x1="1362.0" y1="82.2" x2="1362.0" y2="90.8" stroke="#5a8f1a" stroke-width="2.2" />
<line x1="1369.0" y1="97.9" x2="1378.0" y2="97.9" stroke="#d8141e" stroke-width="2" />
<rect x="1413.6" y="89.5" width="20.0" height="20.1" rx="0" fill="#dcdcdc" />
<polygon points="1413.6,89.5 1420.4,82.6 1440.5,82.6 1433.6,89.5" fill="#f6f6f6" />
<polygon points="1433.6,89.5 1440.5,82.6 1440.5,102.6 1433.6,109.6" fill="#bdbdbd" />
<path d="M1431 109.6 H1413.6 V89.5 L1420.4 82.6 H1440.5 V101" fill="none" stroke="#5a5a5a" stroke-width="1.1" stroke-linejoin="round"/>
<rect x="1430.0" y="101.4" width="16.0" height="11.6" rx="0" fill="#f2f2f2" />
<line x1="1431.0" y1="104.8" x2="1445.0" y2="104.8" stroke="#5a5a5a" stroke-width="1.8" />
<line x1="1431.0" y1="110.8" x2="1445.0" y2="110.8" stroke="#5a5a5a" stroke-width="1.8" />
<line x1="1435.0" y1="102.0" x2="1435.0" y2="107.6" stroke="#1287e6" stroke-width="2" />
<line x1="1441.0" y1="108.0" x2="1441.0" y2="113.6" stroke="#5a5a5a" stroke-width="2" />
<rect x="1456.7" y="82.7" width="28.7" height="27.8" rx="0" fill="#f6f6f6" stroke="#5a5a5a" stroke-width="1.1" />
<rect x="1456.2" y="82.2" width="29.7" height="5.4" rx="0" fill="#616161" />
<rect x="1458.0" y="84.0" width="3.6" height="1.4" rx="0" fill="#f4f4f4" />
<rect x="1459.6" y="91.6" width="22.8" height="14.8" rx="0" fill="none" stroke="#5a5a5a" stroke-width="1" />
<path d="M1459.6 96.6 H1482.4 M1459.6 101.6 H1482.4 M1464.4 91.6 V106.4 M1469.4 91.6 V106.4" fill="none" stroke="#5a5a5a" stroke-width="1" />
<rect x="1473.0" y="101.4" width="16.0" height="11.6" rx="0" fill="#f2f2f2" />
<line x1="1474.0" y1="104.8" x2="1488.0" y2="104.8" stroke="#5a5a5a" stroke-width="1.8" />
<line x1="1474.0" y1="110.8" x2="1488.0" y2="110.8" stroke="#5a5a5a" stroke-width="1.8" />
<line x1="1478.0" y1="102.0" x2="1478.0" y2="107.6" stroke="#1287e6" stroke-width="2" />
<line x1="1484.0" y1="108.0" x2="1484.0" y2="113.6" stroke="#5a5a5a" stroke-width="2" />
<path d="M1525.6 91.1 L1534.4 82.6 H1541 L1533 91.1 V112.2 H1525.6 Z" fill="#dcdcdc" />
<polygon points="1525.6,91.1 1534.4,82.6 1541.0,82.6 1533.0,91.1" fill="#f6f6f6" />
<path d="M1533 112.2 H1525.6 V91.1 L1534.4 82.6 H1541" fill="none" stroke="#5a5a5a" stroke-width="1.1" stroke-linejoin="round"/>
<polygon points="1534.2,91.1 1542.6,82.6 1542.6,103.4 1534.2,112.3" fill="#5cc47e" />
<polygon points="1546.1,91.1 1554.8,82.4 1554.8,103.4 1546.1,112.3" fill="#e8975f" />
<path d="M1568.3 99.2 L1572 95 H1584 V111.5 H1568.3 Z" fill="#dcdcdc" />
<polygon points="1580.8,83.1 1596.7,98.8 1587.0,108.8 1571.5,92.8" fill="#e8975f" />
<polygon points="1574.0,93.4 1585.0,93.4 1580.6,99.0" fill="#f4d9c4" />
<polygon points="1581.6,99.4 1586.8,94.6 1586.8,105.2" fill="#8aa870" />
<path d="M1572 95 L1568.3 99.2 V111.5 H1580" fill="none" stroke="#5a5a5a" stroke-width="1.1" stroke-linejoin="round"/>
<polygon points="1581.3,105.2 1584.8,108.3 1581.3,111.4" fill="#49b464" />
<line x1="1581.3" y1="99.0" x2="1587.0" y2="93.3" stroke="#fff" stroke-width="2.2" />
<line x1="1581.3" y1="99.0" x2="1587.0" y2="93.3" stroke="#2fae50" stroke-width="1.4" stroke-dasharray="1.6 0.9"/>
<polygon points="1614.0,92.4 1637.9,84.0 1637.9,103.4 1614.0,111.9" fill="#e8975f" />
<path d="M1611.4 112.3 C1611.6 100 1614 93 1619 93.4 C1622.6 93.8 1623.6 97.4 1626.4 99.6 C1630 103.4 1635.4 103.6 1637.6 99.4 C1640 95 1640.4 89 1640.6 83.5" fill="none" stroke="#f6e6d8" stroke-width="2.2" />
<path d="M1611.4 112.3 C1611.6 100 1614 93 1619 93.4 C1622.6 93.8 1623.6 97.4 1626.4 99.6 C1630 103.4 1635.4 103.6 1637.6 99.4 C1640 95 1640.4 89 1640.6 83.5" fill="none" stroke="#555" stroke-width="1" />
<rect x="1609.0" y="109.9" width="4.8" height="4.8" rx="0" fill="#f4f4f4" />
<rect x="1609.8" y="110.7" width="3.2" height="3.2" rx="0" fill="#16a63c" />
<rect x="1623.1" y="96.0" width="4.8" height="4.8" rx="0" fill="#f4f4f4" />
<rect x="1623.9" y="96.8" width="3.2" height="3.2" rx="0" fill="#16a63c" />
<rect x="1638.2" y="81.1" width="4.8" height="4.8" rx="0" fill="#f4f4f4" />
<rect x="1639.0" y="81.9" width="3.2" height="3.2" rx="0" fill="#16a63c" />
<polygon points="1654.3,93.3 1673.8,83.5 1682.6,101.7 1663.2,111.4" fill="#e8975f" />
<polygon points="1659.6,96.4 1664.0,92.4 1674.0,92.4 1674.6,101.6 1669.6,106.6 1660.4,106.6" fill="#e9c5ae" />
<polygon points="1662.4,96.6 1671.6,96.6 1671.6,105.0 1663.0,104.0" fill="#dedede" />
<polygon points="1671.6,96.6 1674.4,93.4 1674.4,101.4 1671.6,105.0" fill="#b9b4b0" />
<path d="M1664 92.2 H1672 M1674.6 95 V101.6 L1671.4 105.4 M1658.4 103.6 V107.4 H1667" fill="none" stroke="#555" stroke-width="1" />
<rect x="1656.9" y="94.1" width="4.8" height="4.8" rx="0" fill="#f4f4f4" />
<rect x="1657.7" y="94.9" width="3.2" height="3.2" rx="0" fill="#16a63c" />
<rect x="1671.1" y="90.0" width="4.8" height="4.8" rx="0" fill="#f4f4f4" />
<rect x="1671.9" y="90.8" width="3.2" height="3.2" rx="0" fill="#16a63c" />
<rect x="1667.1" y="104.1" width="4.8" height="4.8" rx="0" fill="#f4f4f4" />
<rect x="1667.9" y="104.9" width="3.2" height="3.2" rx="0" fill="#16a63c" />
<rect x="1711.1" y="100.0" width="27.9" height="5.8" rx="0" fill="#ffa600" />
<line x1="1714.2" y1="100.0" x2="1714.2" y2="101.8" stroke="#a86a00" stroke-width="0.7" />
<line x1="1717.3" y1="100.0" x2="1717.3" y2="102.6" stroke="#a86a00" stroke-width="0.7" />
<line x1="1720.4" y1="100.0" x2="1720.4" y2="101.8" stroke="#a86a00" stroke-width="0.7" />
<line x1="1723.5" y1="100.0" x2="1723.5" y2="102.6" stroke="#a86a00" stroke-width="0.7" />
<line x1="1726.6" y1="100.0" x2="1726.6" y2="101.8" stroke="#a86a00" stroke-width="0.7" />
<line x1="1729.7" y1="100.0" x2="1729.7" y2="102.6" stroke="#a86a00" stroke-width="0.7" />
<line x1="1732.8" y1="100.0" x2="1732.8" y2="101.8" stroke="#a86a00" stroke-width="0.7" />
<line x1="1735.9" y1="100.0" x2="1735.9" y2="102.6" stroke="#a86a00" stroke-width="0.7" />
<line x1="1711.6" y1="90.0" x2="1711.6" y2="98.9" stroke="#555" stroke-width="1" />
<line x1="1738.6" y1="90.0" x2="1738.6" y2="98.9" stroke="#555" stroke-width="1" />
<line x1="1714.0" y1="94.3" x2="1736.0" y2="94.3" stroke="#555" stroke-width="1" />
<polygon points="1712.4,94.3 1716.0,92.2 1716.0,96.4" fill="#555" />
<polygon points="1737.8,94.3 1734.2,92.2 1734.2,96.4" fill="#555" />
<rect x="1771.4" y="91.5" width="19.1" height="18.8" rx="0" fill="#e2e3e6" />
<polygon points="1771.4,91.5 1778.5,84.5 1796.8,84.5 1790.5,91.5" fill="#fafafa" />
<polygon points="1790.5,91.5 1796.8,84.5 1796.8,104.1 1790.5,110.3" fill="#c6c8cd" />
<path d="M1771.4 97 V91.5 L1778.5 84.5 H1796.8 V104.1 L1790.5 110.3 H1771.4 V104.6" fill="none" stroke="#3a3a3a" stroke-width="1.1" stroke-linejoin="round"/>
<path d="M1766.6 105 C1768 99.6 1771 97.6 1775.4 97.6 V94.4 L1783.4 100.4 L1775.4 106.6 V103.2 C1772 102.6 1769.4 103.2 1766.6 105 Z" fill="#f2f2f2" stroke="#f2f2f2" stroke-width="1.6" />
<path d="M1767.4 104.4 C1768.6 100 1771.6 98.4 1775.6 98.4 V95.4 L1782.7 100.4 L1775.6 105.6 V102.6 C1772.4 102 1770 102.6 1767.4 104.4 Z" fill="#3c4045" />
<rect x="1810.0" y="83.1" width="29.0" height="28.7" rx="0" fill="#8ccafa" />
<path d="M1810 100 C1813 96 1816 94.4 1818.6 95.6 C1822 97.4 1825 102.4 1828 103.6 C1830 104 1832 100.6 1834 100.8 C1836 101 1837.6 103 1839 105 V111.8 H1810 Z" fill="#3f8fcb" />
<rect x="1810.4" y="83.5" width="28.2" height="27.9" rx="0" fill="none" stroke="#7ab8ea" stroke-width="0.8" />
<circle cx="1830.9" cy="90.9" r="3.3" fill="#ffffc4" />
<rect x="1865.4" y="82.5" width="27.4" height="21.0" rx="0" fill="none" stroke="#8af060" stroke-width="1.1" stroke-dasharray="4.4 2.6"/>
<path d="M1885.9 96.4 V112.8 L1889.6 109.4 L1892 114.6 L1894.6 113.4 L1892.2 108.4 L1897 108 Z" fill="#fff" />
<polygon points="9.0,157.2 13.8,154.4 13.8,160.0" fill="#333" />
<polygon points="14.2,157.2 19.0,154.4 19.0,160.0" fill="#333" />
<circle cx="287.2" cy="156.4" r="4.3" fill="#222" />
<line x1="284.8" y1="156.4" x2="289.6" y2="156.4" stroke="#f2f2f2" stroke-width="1.3" />
<defs><linearGradient id="tg" x1="0" y1="0" x2="1" y2="0"><stop offset="0" stop-color="#c8c8c8"/><stop offset="1" stop-color="#555"/></linearGradient></defs>
<polygon points="20.6,189.4 31.9,189.4 31.9,178.1" fill="url(#tg)" stroke="#2a2a2a" stroke-width="0.9" stroke-linejoin="round"/>
<path d="M43.1 183.8 C46.6 176.4 55.4 176.4 58.9 183.8 C55.4 191.20000000000002 46.6 191.20000000000002 43.1 183.8 Z" fill="#9a9a9a" />
<circle cx="51.0" cy="183.8" r="3.4" fill="#eeeeee" />
<circle cx="51.0" cy="183.8" r="1.9" fill="#9a9a9a" />
<path d="M68.6 190.8 V180 L70.6 177 H76.6 L78 179 V183.4 H81.6 L83.6 185.6 V190.8 Z" fill="#f0f0f2" stroke="#3a3a3a" stroke-width="1" stroke-linejoin="round"/>
<path d="M68.6 180 H75.6 V190.8 M75.6 180 L77.6 177.6 M75.6 185.6 H83.4 M75.6 185.6 L78 183.4" fill="none" stroke="#555" stroke-width="0.8" />
<circle cx="192.9" cy="184.0" r="7" fill="#e9a21b" />
<text x="191.6" y="188.2" font-family="Liberation Sans, sans-serif" font-size="11" font-weight="700" fill="#fff" text-anchor="middle">T</text>
<circle cx="197.6" cy="188.6" r="2.2" fill="#fff" stroke="#333" stroke-width="1" />
<circle cx="214.4" cy="184.4" r="6" fill="#f8f8f8" stroke="#333" stroke-width="1.3" />
<circle cx="214.4" cy="184.4" r="2.4" fill="#222" />
<polygon points="40.6,202.0 40.6,214.7 49.4,208.3" fill="#e9e9e9" stroke="#2a2a2a" stroke-width="1.4" stroke-linejoin="round"/>
<polygon points="74.1,207.0 74.1,208.2 71.9,208.9 71.6,209.8 72.6,211.8 71.7,212.7 69.7,211.7 68.8,212.0 68.1,214.2 66.9,214.2 66.2,212.0 65.3,211.7 63.3,212.7 62.4,211.8 63.4,209.8 63.1,208.9 60.9,208.2 60.9,207.0 63.1,206.3 63.4,205.4 62.4,203.4 63.3,202.5 65.3,203.5 66.2,203.2 66.9,201.0 68.1,201.0 68.8,203.2 69.7,203.5 71.7,202.5 72.6,203.4 71.6,205.4 71.9,206.3" fill="#777" />
<circle cx="67.5" cy="207.6" r="2.3" fill="#f1f1f1" />
<polygon points="40.6,226.0 40.6,238.7 49.4,232.3" fill="#e9e9e9" stroke="#2a2a2a" stroke-width="1.4" stroke-linejoin="round"/>
<path d="M61 225.6 H67.4 L68.4 226.8 H61 Z" fill="#9a9a9a" />
<path d="M61 227.8 H68.6 L69.8 226.8 H76.8 V238.2 H61 Z" fill="#9a9a9a" />
<polygon points="40.6,250.0 40.6,262.7 49.4,256.3" fill="#e9e9e9" stroke="#2a2a2a" stroke-width="1.4" stroke-linejoin="round"/>
<path d="M61.1 256 C64.6 249 73.4 249 76.9 256 C73.4 263 64.6 263 61.1 256 Z" fill="none" stroke="#a6a6a6" stroke-width="0.9" />
<circle cx="69.0" cy="256.0" r="2.8" fill="none" stroke="#a6a6a6" stroke-width="0.9" />
<line x1="63.2" y1="250.2" x2="74.8" y2="261.8" stroke="#f1f1f1" stroke-width="2.6" />
<line x1="63.2" y1="250.2" x2="74.8" y2="261.8" stroke="#a6a6a6" stroke-width="0.9" />
<path d="M86.2 249.6 H92.60000000000001 L93.60000000000001 250.8 H86.2 Z" fill="#9a9a9a" />
<path d="M86.2 251.8 H93.8 L95.0 250.8 H102.0 V262.2 H86.2 Z" fill="#9a9a9a" />

<polygon points="38.6,285.4 49.9,285.4 49.9,274.1" fill="url(#tg)" stroke="#2a2a2a" stroke-width="0.9" stroke-linejoin="round"/>
<path d="M61.1 280 C64.6 272.6 73.4 272.6 76.9 280 C73.4 287.4 64.6 287.4 61.1 280 Z" fill="#9a9a9a" />
<circle cx="69.0" cy="280.0" r="3.4" fill="#eeeeee" />
<circle cx="69.0" cy="280.0" r="1.9" fill="#9a9a9a" />
<path d="M87 275.4 L89.4 273 H100 V284 L97.6 286.8 H87 Z" fill="#e9e9ea" stroke="#444" stroke-width="1" stroke-linejoin="round"/>
<path d="M97.6 275.4 L100 273 V284 L97.6 286.8 Z" fill="#cfd0d2" />
<path d="M87 275.4 H97.6 V286.8 M97.6 275.4 L100 273" fill="none" stroke="#666" stroke-width="0.7" />
<rect x="112.2" y="279.9" width="8.6" height="5.2" rx="2.6" fill="none" stroke="#262626" stroke-width="2" transform="rotate(-42 116.5 282.5)"/>
<rect x="117.4" y="274.6" width="8.6" height="5.2" rx="2.6" fill="none" stroke="#262626" stroke-width="2" transform="rotate(-42 121.7 277.2)"/>
<polygon points="58.6,298.0 58.6,310.7 67.4,304.3" fill="#e9e9e9" stroke="#2a2a2a" stroke-width="1.4" stroke-linejoin="round"/>
<path d="M79.1 304 C82.6 297 91.4 297 94.9 304 C91.4 311 82.6 311 79.1 304 Z" fill="none" stroke="#a6a6a6" stroke-width="0.9" />
<circle cx="87.0" cy="304.0" r="2.8" fill="none" stroke="#a6a6a6" stroke-width="0.9" />
<line x1="81.2" y1="298.2" x2="92.8" y2="309.8" stroke="#f1f1f1" stroke-width="2.6" />
<line x1="81.2" y1="298.2" x2="92.8" y2="309.8" stroke="#a6a6a6" stroke-width="0.9" />
<path d="M104.2 297.6 H110.60000000000001 L111.60000000000001 298.8 H104.2 Z" fill="#9a9a9a" />
<path d="M104.2 299.8 H111.8 L113.0 298.8 H120.0 V310.2 H104.2 Z" fill="#9a9a9a" />
<polygon points="58.6,322.0 58.6,334.7 67.4,328.3" fill="#e9e9e9" stroke="#2a2a2a" stroke-width="1.4" stroke-linejoin="round"/>
<path d="M79.1 328 C82.6 320.6 91.4 320.6 94.9 328 C91.4 335.4 82.6 335.4 79.1 328 Z" fill="#9a9a9a" />
<circle cx="87.0" cy="328.0" r="3.4" fill="#eeeeee" />
<circle cx="87.0" cy="328.0" r="1.9" fill="#9a9a9a" />
<path d="M104.2 321.6 H110.60000000000001 L111.60000000000001 322.8 H104.2 Z" fill="#9a9a9a" />
<path d="M104.2 323.8 H111.8 L113.0 322.8 H120.0 V334.2 H104.2 Z" fill="#9a9a9a" />
<polygon points="58.6,346.0 58.6,358.7 67.4,352.3" fill="#e9e9e9" stroke="#2a2a2a" stroke-width="1.4" stroke-linejoin="round"/>
<path d="M79.1 352 C82.6 344.6 91.4 344.6 94.9 352 C91.4 359.4 82.6 359.4 79.1 352 Z" fill="#9a9a9a" />
<circle cx="87.0" cy="352.0" r="3.4" fill="#eeeeee" />
<circle cx="87.0" cy="352.0" r="1.9" fill="#9a9a9a" />
<path d="M104.2 345.6 H110.60000000000001 L111.60000000000001 346.8 H104.2 Z" fill="#9a9a9a" />
<path d="M104.2 347.8 H111.8 L113.0 346.8 H120.0 V358.2 H104.2 Z" fill="#9a9a9a" />

<polygon points="56.6,381.4 67.9,381.4 67.9,370.1" fill="url(#tg)" stroke="#2a2a2a" stroke-width="0.9" stroke-linejoin="round"/>
<path d="M79.1 376 C82.6 368.6 91.4 368.6 94.9 376 C91.4 383.4 82.6 383.4 79.1 376 Z" fill="#9a9a9a" />
<circle cx="87.0" cy="376.0" r="3.4" fill="#eeeeee" />
<circle cx="87.0" cy="376.0" r="1.9" fill="#9a9a9a" />
<path d="M104.2 369.6 H110.60000000000001 L111.60000000000001 370.8 H104.2 Z" fill="#9a9a9a" />
<path d="M104.2 371.8 H111.8 L113.0 370.8 H120.0 V382.2 H104.2 Z" fill="#9a9a9a" />
<path d="M97.1 400 C100.6 393 109.4 393 112.9 400 C109.4 407 100.6 407 97.1 400 Z" fill="none" stroke="#a6a6a6" stroke-width="0.9" />
<circle cx="105.0" cy="400.0" r="2.8" fill="none" stroke="#a6a6a6" stroke-width="0.9" />
<line x1="99.2" y1="394.2" x2="110.8" y2="405.8" stroke="#f1f1f1" stroke-width="2.6" />
<line x1="99.2" y1="394.2" x2="110.8" y2="405.8" stroke="#a6a6a6" stroke-width="0.9" />
<rect x="126.4" y="393.6" width="11.2" height="11.0" rx="0" fill="#f4f4f4" stroke="#555" stroke-width="1" />
<rect x="122.0" y="396.4" width="11.6" height="11.2" rx="0" fill="#e8905a" />
<rect x="124.6" y="396.4" width="9.0" height="8.2" rx="0" fill="#eeb08c" />
<polygon points="58.6,418.0 58.6,430.7 67.4,424.3" fill="#e9e9e9" stroke="#2a2a2a" stroke-width="1.4" stroke-linejoin="round"/>
<path d="M79.2 417.6 H85.60000000000001 L86.60000000000001 418.8 H79.2 Z" fill="#9a9a9a" />
<path d="M79.2 419.8 H86.8 L88.0 418.8 H95.0 V430.2 H79.2 Z" fill="#9a9a9a" />
<circle cx="287.2" cy="973.4" r="4.3" fill="#222" />
<path d="M284.8 973.4 H289.6 M287.2 971 V975.8" fill="none" stroke="#f2f2f2" stroke-width="1.2" />
<rect x="11.0" y="1009.2" width="1.6" height="11.6" rx="0" fill="#5a5a5a" />
<polygon points="22.0,1009.2 22.0,1020.8 13.0,1015.0" fill="#5a5a5a" />
<polygon points="44.0,1009.4 44.0,1020.6 35.0,1015.0" fill="#5a5a5a" />
<rect x="45.4" y="1012.6" width="1.4" height="4.8" rx="0" fill="#5a5a5a" />
<polygon points="60.4,1007.6 60.4,1022.0 73.0,1014.8" fill="#5a5a5a" />
<rect x="84.8" y="1012.6" width="1.4" height="4.8" rx="0" fill="#5a5a5a" />
<polygon points="87.6,1009.4 87.6,1020.6 96.6,1015.0" fill="#5a5a5a" />
<polygon points="110.6,1009.2 110.6,1020.8 119.6,1015.0" fill="#5a5a5a" />
<rect x="120.0" y="1009.2" width="1.6" height="11.6" rx="0" fill="#5a5a5a" />
<path d="M146.4 1009.6 L149.4 1006.6 H161.4 V1018.6 L158.4 1021.6 H146.4 Z" fill="#dcdcdc" stroke="#555" stroke-width="1" stroke-linejoin="round"/>
<path d="M158.4 1009.6 L161.4 1006.6" fill="none" stroke="#777" stroke-width="0.7" />
<path d="M151 1017.6 a2 2 0 0 1 0 -2.8 l2.6 -2.4 a2 2 0 0 1 2.8 0 M157 1012 a2 2 0 0 1 0 2.8 l-2.6 2.4 a2 2 0 0 1 -2.8 0" fill="none" stroke="#8a8a8a" stroke-width="1.1" />
<line x1="154.6" y1="1025.0" x2="154.6" y2="1031.0" stroke="#cfcfcf" stroke-width="1.2" />
<line x1="165.9" y1="1003.0" x2="165.9" y2="1031.4" stroke="#5a5a5a" stroke-width="1.8" />
<path d="M160 1000.2 H171.8 V1002 L166.6 1007 H165.2 L160 1002 Z" fill="#5a5a5a" />
<polygon points="1905.5,1013.8 1905.5,1015.2 1903.1,1016.0 1902.7,1016.9 1903.9,1019.1 1902.9,1020.1 1900.7,1018.9 1899.8,1019.3 1899.0,1021.7 1897.6,1021.7 1896.8,1019.3 1895.9,1018.9 1893.7,1020.1 1892.7,1019.1 1893.9,1016.9 1893.5,1016.0 1891.1,1015.2 1891.1,1013.8 1893.5,1013.0 1893.9,1012.1 1892.7,1009.9 1893.7,1008.9 1895.9,1010.1 1896.8,1009.7 1897.6,1007.3 1899.0,1007.3 1899.8,1009.7 1900.7,1010.1 1902.9,1008.9 1903.9,1009.9 1902.7,1012.1 1903.1,1013.0" fill="#7a7a7a" />
<circle cx="1898.3" cy="1014.5" r="2.7" fill="#f2f2f2" />
<ellipse cx="771.0" cy="972.0" rx="3.4" ry="7.6" fill="none" stroke="#333" stroke-width="1" />
<path d="M766 968.6 C762.6 970 762.6 974 766 975.4 M769 975.8 C773 977 778 975 778.4 972 C778.6 970 776 968.6 774.4 968.4" fill="none" stroke="#333" stroke-width="1" />
<path d="M770.4 969 l1 1.6 l1.6 1 l-1.6 1 l-1 1.6 l-1 -1.6 l-1.6 -1 l1.6 -1 Z" fill="#1287e6" />
<path d="M773 968.6 l1 1 l1 -1 M774 967.4 v2" fill="none" stroke="#333" stroke-width="0.8" />
<polygon points="783.9,969.9 790.1,969.9 787.0,973.7" fill="#222" />
<path d="M797.6 969.4 L801.4 965 L804 967 L808 965.4 V969.4" fill="#c9c9c9" stroke="#333" stroke-width="1" stroke-linejoin="round"/>
<rect x="796.6" y="969.4" width="15.0" height="10.2" rx="0" fill="#f4f4f4" stroke="#333" stroke-width="1.2" />
<rect x="799.4" y="972.6" width="9.4" height="3.8" rx="0" fill="#b8c0cc" stroke="#333" stroke-width="0.9" />
<path d="M826.6 979.4 C824 976 823 974 823.4 972.6 C824.4 971.4 826 972.4 827 974 V966.4 C827 964.8 829 964.8 829 966.4 V964.8 C829 963.2 831.2 963.2 831.2 964.8 V965.6 C831.2 964.2 833.4 964.2 833.4 965.8 V967 C833.6 965.6 835.6 965.8 835.6 967.4 V974.6 C835.6 977 834.6 978.4 833.6 979.4 Z" fill="#fafafa" stroke="#333" stroke-width="1" stroke-linejoin="round"/>
<path d="M829 966.4 V971.4 M831.2 965.6 V971.4 M833.4 967 V971.6" fill="none" stroke="#333" stroke-width="0.8" />
<circle cx="854.0" cy="971.0" r="5" fill="#e4eef2" stroke="#333" stroke-width="1.2" />
<line x1="857.8" y1="975.0" x2="861.6" y2="979.0" stroke="#333" stroke-width="2.2" />
<path d="M859.6 966.6 H864 M861.8 964.4 V968.8 M859.6 970.6 H864" fill="none" stroke="#333" stroke-width="0.9" />
<circle cx="880.6" cy="970.6" r="6" fill="#f0f0f0" stroke="#333" stroke-width="1.4" />
<line x1="885.0" y1="975.2" x2="889.4" y2="979.6" stroke="#333" stroke-width="2.4" />
<rect x="877.8" y="967.8" width="5.8" height="5.8" rx="0" fill="#e6e6e6" stroke="#333" stroke-width="0.9" />
<polygon points="894.6,969.9 900.8,969.9 897.7,973.7" fill="#222" />
<rect x="907.4" y="964.6" width="15.4" height="11.8" rx="1" fill="#e4e4e4" stroke="#333" stroke-width="1.1" />
<rect x="909.4" y="966.4" width="11.4" height="8.2" rx="0" fill="#8fb0de" stroke="#44608a" stroke-width="0.8" />
<path d="M912.6 976.6 L911.4 979.4 H918.8 L917.6 976.6" fill="#e4e4e4" stroke="#333" stroke-width="0.8" />
<polygon points="925.0,969.9 931.2,969.9 928.1,973.7" fill="#222" />
<rect x="938.4" y="964.4" width="15.2" height="15.2" rx="0" fill="#b6b6bc" stroke="#555" stroke-width="1" />
<line x1="941.4" y1="964.4" x2="941.4" y2="979.6" stroke="#4a4a50" stroke-width="0.8" />
<line x1="938.4" y1="967.4" x2="953.6" y2="967.4" stroke="#4a4a50" stroke-width="0.8" />
<line x1="944.5" y1="964.4" x2="944.5" y2="979.6" stroke="#4a4a50" stroke-width="0.8" />
<line x1="938.4" y1="970.5" x2="953.6" y2="970.5" stroke="#4a4a50" stroke-width="0.8" />
<line x1="947.5" y1="964.4" x2="947.5" y2="979.6" stroke="#4a4a50" stroke-width="0.8" />
<line x1="938.4" y1="973.5" x2="953.6" y2="973.5" stroke="#4a4a50" stroke-width="0.8" />
<line x1="950.6" y1="964.4" x2="950.6" y2="979.6" stroke="#4a4a50" stroke-width="0.8" />
<line x1="938.4" y1="976.6" x2="953.6" y2="976.6" stroke="#4a4a50" stroke-width="0.8" />
<polygon points="956.0,969.9 962.2,969.9 959.1,973.7" fill="#222" />
<rect x="969.4" y="965.2" width="6.6" height="6.4" rx="0" fill="#a9bde2" stroke="#34538f" stroke-width="1" />
<rect x="971.1" y="966.9" width="3.2" height="3.0" rx="0" fill="#bccdec" stroke="#7f9acb" stroke-width="0.6" />
<rect x="977.2" y="965.2" width="6.6" height="6.4" rx="0" fill="#a9bde2" stroke="#34538f" stroke-width="1" />
<rect x="978.9" y="966.9" width="3.2" height="3.0" rx="0" fill="#bccdec" stroke="#7f9acb" stroke-width="0.6" />
<rect x="969.4" y="972.8" width="6.6" height="6.4" rx="0" fill="#a9bde2" stroke="#34538f" stroke-width="1" />
<rect x="971.1" y="974.5" width="3.2" height="3.0" rx="0" fill="#bccdec" stroke="#7f9acb" stroke-width="0.6" />
<rect x="977.2" y="972.8" width="6.6" height="6.4" rx="0" fill="#a9bde2" stroke="#34538f" stroke-width="1" />
<rect x="978.9" y="974.5" width="3.2" height="3.0" rx="0" fill="#bccdec" stroke="#7f9acb" stroke-width="0.6" />
<polygon points="986.9,969.9 993.1,969.9 990.0,973.7" fill="#222" />
<polygon points="1015.3,964.7 1021.7,968.4 1015.3,972.0 1008.9,968.4" fill="#9ec2d2" />
<polygon points="1008.9,968.4 1015.3,972.0 1015.3,979.3 1008.9,975.6" fill="#8ab4c6" />
<polygon points="1021.7,968.4 1015.3,972.0 1015.3,979.3 1021.7,975.6" fill="#79a3b5" />
<polygon points="1041.3,964.8 1047.7,968.5 1041.3,972.1 1034.9,968.5" fill="#9ec2d2" />
<polygon points="1034.9,968.5 1041.3,972.1 1041.3,979.4 1034.9,975.7" fill="#8ab4c6" />
<polygon points="1047.7,968.5 1041.3,972.1 1041.3,979.4 1047.7,975.7" fill="#79a3b5" />
<path d="M1041.3 964.8000000000001 V972.1 M1034.8999999999999 975.7 L1041.3 972.1 L1047.7 975.7" fill="none" stroke="#6a8896" stroke-width="0.7" />
<polygon points="1041.3,964.8 1047.7,968.5 1047.7,975.7 1041.3,979.4 1034.9,975.7 1034.9,968.5" fill="none" stroke="#2a2a2a" stroke-width="0.9" />
<path d="M1034.8999999999999 968.5 L1041.3 972.1 L1047.7 968.5 M1041.3 972.1 V979.4" fill="none" stroke="#2a2a2a" stroke-width="0.9" />
<polygon points="1067.3,964.9 1073.7,968.6 1067.3,972.2 1060.9,968.6" fill="#9ec2d2" />
<polygon points="1060.9,968.6 1067.3,972.2 1067.3,979.5 1060.9,975.8" fill="#8ab4c6" />
<polygon points="1073.7,968.6 1067.3,972.2 1067.3,979.5 1073.7,975.8" fill="#79a3b5" />
<polygon points="1067.3,964.9 1073.7,968.6 1073.7,975.8 1067.3,979.5 1060.9,975.8 1060.9,968.6" fill="none" stroke="#2a2a2a" stroke-width="0.9" />
<path d="M1060.8999999999999 968.6 L1067.3 972.2 L1073.7 968.6 M1067.3 972.2 V979.5" fill="none" stroke="#2a2a2a" stroke-width="0.9" />
<polygon points="1092.8,964.9 1099.2,968.6 1099.2,975.8 1092.8,979.5 1086.4,975.8 1086.4,968.6" fill="none" stroke="#2a2a2a" stroke-width="0.9" />
<path d="M1086.3999999999999 968.6 L1092.8 972.2 L1099.2 968.6 M1092.8 972.2 V979.5" fill="none" stroke="#2a2a2a" stroke-width="0.9" />
<path d="M1092.8 964.9000000000001 V972.2 M1086.3999999999999 975.8000000000001 L1092.8 972.2 L1099.2 975.8000000000001" fill="none" stroke="#2a2a2a" stroke-width="0.9" />
<polygon points="1118.9,964.9 1125.3,968.6 1125.3,975.8 1118.9,979.5 1112.5,975.8 1112.5,968.6" fill="none" stroke="#2a2a2a" stroke-width="0.9" />
<path d="M1112.5 968.6 L1118.9 972.2 L1125.3000000000002 968.6 M1118.9 972.2 V979.5" fill="none" stroke="#2a2a2a" stroke-width="0.9" />
<path d="M1118.9 964.9000000000001 V972.2 M1112.5 975.8000000000001 L1118.9 972.2 L1125.3000000000002 975.8000000000001" fill="none" stroke="#c2c2c2" stroke-width="0.9" />
<polygon points="1144.8,964.9 1151.2,968.6 1151.2,975.8 1144.8,979.5 1138.4,975.8 1138.4,968.6" fill="none" stroke="#2a2a2a" stroke-width="0.9" />
<path d="M1138.3999999999999 968.6 L1144.8 972.2 L1151.2 968.6 M1144.8 972.2 V979.5" fill="none" stroke="#2a2a2a" stroke-width="0.9" />
</svg>
<div style="position:absolute;left:1209px;top:135px;width:201px;height:270px;box-sizing:border-box;border:1px solid #868686;border-radius:0 0 4px 4px;background:#fff;box-shadow:0 0 0 0.5px #e8e8e8"></div>
<div style="position:absolute;left:1214px;top:158px;width:191px;height:20px;background:#dadada"></div>
<span class="t" style="left:1234.07px;top:141.5px;font-size:11px;line-height:16px;color:#3a3a3a;font-weight:400;transform:scaleX(0.8465)">新規コンポーネント</span>
<span class="t" style="left:1233.70px;top:160.6px;font-size:11px;line-height:16px;color:#3a3a3a;font-weight:400;transform:scaleX(0.8443)">ジョイント</span>
<span class="t" style="left:1233.56px;top:181.4px;font-size:11px;line-height:16px;color:#3a3a3a;font-weight:400;transform:scaleX(0.9024)">ジョイントを使用して複製</span>
<span class="t" style="left:1234.51px;top:201.0px;font-size:11px;line-height:16px;color:#3a3a3a;font-weight:400;transform:scaleX(0.9152)">位置固定ジョイント</span>
<span class="t" style="left:1233.56px;top:220.8px;font-size:11px;line-height:16px;color:#3a3a3a;font-weight:400;transform:scaleX(0.8913)">ジョイントの原点</span>
<span class="t" style="left:1234.64px;top:240.8px;font-size:11px;line-height:16px;color:#3a3a3a;font-weight:400;transform:scaleX(0.8797)">剛性グループ</span>
<span class="t" style="left:1234.72px;top:261.0px;font-size:11px;line-height:16px;color:#3a3a3a;font-weight:400;transform:scaleX(0.9595)">接線関係</span>
<span class="t" style="left:1233.59px;top:282.4px;font-size:11px;line-height:16px;color:#3a3a3a;font-weight:400;transform:scaleX(0.8776)">ジョイントを駆動</span>
<span class="t" style="left:1234.42px;top:302.0px;font-size:11px;line-height:16px;color:#3a3a3a;font-weight:400;transform:scaleX(0.8127)">モーション リンク</span>
<span class="t" style="left:1234.72px;top:323.6px;font-size:11px;line-height:16px;color:#3a3a3a;font-weight:400;transform:scaleX(0.9171)">接触セットを有効化</span>
<span class="t" style="left:1234.07px;top:343.4px;font-size:11px;line-height:16px;color:#3a3a3a;font-weight:400;transform:scaleX(0.8995)">すべての接触を有効にする</span>
<span class="t" style="left:1234.42px;top:364.4px;font-size:11px;line-height:16px;color:#3a3a3a;font-weight:400;transform:scaleX(0.8237)">モーション スタディ</span>
<span class="t" style="left:1234.07px;top:385.6px;font-size:11px;line-height:16px;color:#3a3a3a;font-weight:400;transform:scaleX(0.9806)">部品表</span>
<span class="t" style="left:1346.48px;top:160.4px;font-size:11px;line-height:16px;color:#3a3a3a;font-weight:400;transform:scaleX(1.0226)">J</span>
<span class="t" style="left:1346.16px;top:200.4px;font-size:11px;line-height:16px;color:#3a3a3a;font-weight:400;transform:scaleX(0.9572)">Shift+J</span>
<div style="position:absolute;left:1214px;top:278.0px;width:191px;height:1.0px;background:#7a7a7a"></div>
<div style="position:absolute;left:1214px;top:319.0px;width:191px;height:1.0px;background:#7a7a7a"></div>
<div style="position:absolute;left:1214px;top:360.0px;width:191px;height:1.0px;background:#7a7a7a"></div>
<div style="position:absolute;left:1214px;top:381.0px;width:191px;height:1.0px;background:#7a7a7a"></div>
<div style="position:absolute;left:1414px;top:162px;width:336px;height:396px;background:#505050;border-radius:10px"></div>
<span class="t" style="left:1430.36px;top:191.0px;font-size:11px;line-height:16px;color:#fff;font-weight:500;transform:scaleX(0.9684)">アセンブリ内でコンポーネントを相対的に配置し、コンポーネント</span>
<span class="t" style="left:1429.64px;top:207.0px;font-size:11px;line-height:16px;color:#fff;font-weight:500;transform:scaleX(0.9998)">間の相対的なモーションを定義します。</span>
<span class="t" style="left:1430.26px;top:239.0px;font-size:11px;line-height:16px;color:#fff;font-weight:500;transform:scaleX(0.9734)">[位置]タブで、各コンポーネントにジョイントの原点のスナップ点を</span>
<span class="t" style="left:1430.01px;top:255.0px;font-size:11px;line-height:16px;color:#fff;font-weight:500;transform:scaleX(0.9660)">配置してコンポーネントを配置します。[モーション]タブで、モーショ</span>
<span class="t" style="left:1429.28px;top:271.0px;font-size:11px;line-height:16px;color:#fff;font-weight:500;transform:scaleX(1.0199)">ンの[タイプ]を選択し、関連する設定を調整し、ジョイントの制限</span>
<span class="t" style="left:1429.46px;top:287.0px;font-size:11px;line-height:16px;color:#fff;font-weight:500;transform:scaleX(0.9470)">を追加し、ジョイント モーションをプレビューします。</span>
<span class="t" style="left:1429.61px;top:539.0px;font-size:11px;line-height:16px;color:#fff;font-weight:500;transform:scaleX(0.9924)">ヘルプを表示するには Ctrl+/ を押してください。</span>
<svg class="ov" width="1920" height="1040" viewBox="0 0 1920 1040">
<defs><linearGradient id="cy1" x1="0" y1="0" x2="0" y2="1"><stop offset="0" stop-color="#f27b52"/><stop offset="0.5" stop-color="#e4704a"/><stop offset="1" stop-color="#d9653f"/></linearGradient><linearGradient id="cy2" gradientUnits="userSpaceOnUse" x1="1568" y1="427" x2="1592" y2="472"><stop offset="0" stop-color="#f77e54"/><stop offset="0.6" stop-color="#ec764e"/><stop offset="1" stop-color="#da6a46"/></linearGradient><linearGradient id="cy3" gradientUnits="userSpaceOnUse" x1="1722" y1="356" x2="1700" y2="400"><stop offset="0" stop-color="#f57c52"/><stop offset="0.5" stop-color="#d9694a"/><stop offset="1" stop-color="#9c4c36"/></linearGradient><radialGradient id="hl" cx="0.4" cy="0.4" r="0.7"><stop offset="0" stop-color="#2f98a8"/><stop offset="1" stop-color="#1f7482"/></radialGradient></defs>
<path d="M1436.2 350.4 H1517 C1521.4 350.4 1524.2 356 1524.2 364.2 C1524.2 372.4 1521.4 378.2 1517 378.2 H1436.2 Z" fill="url(#cy1)" />
<ellipse cx="1436.2" cy="364.2" rx="7.6" ry="13.8" fill="#f57c52" />
<path d="M1432 409 C1432 402 1438 399.6 1445 399.6 C1452 399.6 1458.6 403 1458.6 409 V487 C1458.6 493.6 1452 496.4 1445 496.4 C1438 496.4 1432 493.6 1432 487 Z" fill="none" stroke="#7e7e7e" stroke-width="0.9" />
<polygon points="1476.0,398.9 1518.7,423.8 1476.0,447.5 1433.5,423.8" fill="#5bccdf" stroke="#14343a" stroke-width="0.7" stroke-linejoin="round"/>
<polygon points="1433.5,423.8 1476.0,447.5 1476.0,496.6 1433.5,472.5" fill="#50bbcf" stroke="#14343a" stroke-width="0.7" stroke-linejoin="round"/>
<polygon points="1518.7,423.8 1476.0,447.5 1476.0,496.6 1518.7,472.5" fill="#4ab0c1" stroke="#14343a" stroke-width="0.7" stroke-linejoin="round"/>
<ellipse cx="1454.6" cy="459.8" rx="10.4" ry="14" fill="url(#hl)" stroke="#17505c" stroke-width="0.9" transform="rotate(-27 1454.6 459.8)"/>
<ellipse cx="1457.0" cy="463.0" rx="6.4" ry="10.4" fill="#3a9fb0" transform="rotate(-27 1457 463)" opacity="0.55"/>
<path d="M1686.5 357.7 C1690 355 1692.6 353.4 1695.4 351.9 C1698 350.4 1700.4 349.6 1703.1 349.6 C1706 349.6 1709 350.4 1711.5 351.9 C1714.6 353.8 1717.6 356.6 1720 360 C1722.6 363.2 1724.8 366.6 1726.2 370 C1727.8 373.4 1728.8 376.8 1729.2 380 C1729.8 383 1729.6 386 1728.8 388.5 C1728 391.4 1726.2 393.8 1723.8 395.4 L1711.9 401.9 L1700 404 L1686 380 Z" fill="url(#cy3)" stroke="#2a1a14" stroke-width="0.6" />
<polygon points="1630.2,327.3 1710.8,373.5 1630.9,419.0 1550.5,373.5" fill="#5bccdf" stroke="#14343a" stroke-width="0.8" stroke-linejoin="round"/>
<polygon points="1550.5,373.5 1630.9,419.0 1630.9,511.4 1550.5,465.5" fill="#50bbcf" stroke="#14343a" stroke-width="0.8" stroke-linejoin="round"/>
<polygon points="1710.8,373.5 1630.9,419.0 1630.9,511.4 1710.8,465.5" fill="#4ab0c1" stroke="#14343a" stroke-width="0.8" stroke-linejoin="round"/>
<defs><radialGradient id="ao" gradientUnits="userSpaceOnUse" cx="1590" cy="446" r="48"><stop offset="0" stop-color="#1d6a78" stop-opacity="0.55"/><stop offset="0.45" stop-color="#1d6a78" stop-opacity="0.28"/><stop offset="1" stop-color="#1d6a78" stop-opacity="0"/></radialGradient></defs>
<polygon points="1550.5,373.5 1630.9,419.0 1630.9,511.4 1550.5,465.5" fill="url(#ao)" />
<ellipse cx="1590.6" cy="443.6" rx="19.4" ry="26" fill="#0f3038" transform="rotate(-29 1590.6 443.6)"/>
<path d="M1552.1 436.5 L1582.4 418.3 C1588 417.6 1593 419.6 1597.3 423.1 C1601.6 426.8 1604.8 432 1606.9 438.5 C1609 443 1610.4 447.6 1610.3 451.9 C1610.4 456 1609.2 459.8 1606.9 462.5 C1605.4 464.4 1603.6 466 1601.6 466.8 L1568.5 483.2 Z" fill="url(#cy2)" stroke="#3a1a10" stroke-width="0.6" />
<ellipse cx="1560.3" cy="460.1" rx="17.6" ry="25" fill="#df6e49" stroke="#2a120a" stroke-width="0.9" transform="rotate(-29 1560.3 460.1)"/>
<path d="M1581 439.4 L1592 433.2 M1588.2 452.4 L1599.2 445.7" fill="none" stroke="#f6d2c2" stroke-width="1.2" />
<polygon points="1588.7,439.9 1596.8,438.5 1592.5,445.2" fill="#d9b6a2" />
<rect x="1215.4" y="143.4" width="7.2" height="7.0" rx="0" fill="#6aaee4" />
<polygon points="1215.4,143.4 1217.0,142.0 1224.0,142.0 1222.6,143.4" fill="#8ccafa" />
<rect x="1215.6" y="150.6" width="6.8" height="4.8" rx="0" fill="#e4e4e4" stroke="#6a6a6a" stroke-width="0.9" />
<rect x="1222.8" y="147.6" width="6.2" height="7.8" rx="0" fill="#eee" stroke="#6a6a6a" stroke-width="0.9" />
<polygon points="1226.4,140.6 1227.1,143.2 1229.5,141.9 1228.2,144.3 1230.8,145.0 1228.2,145.7 1229.5,148.1 1227.1,146.8 1226.4,149.4 1225.7,146.8 1223.3,148.1 1224.6,145.7 1222.0,145.0 1224.6,144.3 1223.3,141.9 1225.7,143.2" fill="#ffa400" />
<path d="M1215.6 174.6 V164.6 L1218 161.6 C1219 161 1220.6 161.2 1221 162 V166.6 L1219.6 167.4 V172 Z" fill="#d2d2d2" stroke="#5e5e5e" stroke-width="0.9" stroke-linejoin="round"/>
<path d="M1223 166.2 C1223.6 165.4 1225 165.4 1225.6 165.8 V162.4 L1226.6 161.6 L1230 165 V175 L1226 172.2 C1224.8 172.4 1223.6 172.2 1223 171.6 Z" fill="#e8e8e8" stroke="#5e5e5e" stroke-width="0.9" stroke-linejoin="round"/>
<line x1="1219.8" y1="167.8" x2="1219.8" y2="170.4" stroke="#1287e6" stroke-width="1.1" />
<line x1="1224.4" y1="163.4" x2="1224.4" y2="166.2" stroke="#1287e6" stroke-width="1.1" />
<rect x="1215.4" y="183.6" width="3.8" height="12.0" rx="1.9" fill="#d2d2d2" stroke="#5e5e5e" stroke-width="0.9" />
<line x1="1215.4" y1="189.6" x2="1219.2" y2="189.6" stroke="#5e5e5e" stroke-width="0.8" />
<rect x="1221.4" y="184.4" width="3.8" height="8.2" rx="1.9" fill="#e8e8e8" stroke="#5e5e5e" stroke-width="0.9" />
<path d="M1226.6 190.6 V184.6 L1228.4 183.2 L1230.6 185.6 V190.6" fill="#e8e8e8" stroke="#5e5e5e" stroke-width="0.9" />
<line x1="1224.0" y1="180.6" x2="1224.0" y2="184.6" stroke="#1287e6" stroke-width="1.1" />
<line x1="1228.6" y1="181.0" x2="1228.6" y2="184.0" stroke="#1287e6" stroke-width="1.1" />
<path d="M1217.1 216.3 V206.8 L1220.8 202.0 C1221.8 201.20000000000002 1224.0 201.20000000000002 1224.6 202.20000000000002 L1228.1 206.4 V216.3 L1224.6 213.0 H1220.6 Z" fill="#d2d2d2" stroke="#5e5e5e" stroke-width="1" stroke-linejoin="round"/>
<path d="M1220.8 202.8 C1221.8 202.20000000000002 1223.8 202.20000000000002 1224.6 203.0 V209.20000000000002 H1220.8 Z" fill="#e8e8e8" />
<path d="M1220.8 209.20000000000002 V213.0 M1224.6 203.0 V213.0" fill="none" stroke="#5e5e5e" stroke-width="0.8" />
<path d="M1224.4 222.4 A6.6 6.6 0 1 0 1229 227.6 H1225.6 A3 3 0 1 1 1224.4 225.6 Z" fill="#f4f4f4" stroke="#5e5e5e" stroke-width="1" stroke-linejoin="round"/>
<line x1="1222.8" y1="220.4" x2="1222.8" y2="224.0" stroke="#5a8f1a" stroke-width="1.2" />
<line x1="1227.4" y1="228.4" x2="1231.0" y2="228.4" stroke="#d8141e" stroke-width="1.2" />
<rect x="1215.2" y="240.6" width="7.8" height="7.8" rx="0" fill="#4a92cc" />
<rect x="1223.0" y="248.4" width="7.8" height="7.6" rx="0" fill="#5aa0dc" />
<rect x="1223.4" y="241.0" width="7.0" height="7.0" rx="0" fill="#f4f4f4" stroke="#666" stroke-width="0.9" />
<rect x="1215.6" y="248.8" width="7.0" height="6.8" rx="0" fill="#f4f4f4" stroke="#666" stroke-width="0.9" />
<rect x="1221.8" y="243.4" width="2.8" height="2.6" rx="0" fill="#f4f4f4" />
<rect x="1221.4" y="250.6" width="2.8" height="2.8" rx="0" fill="#5aa0dc" />
<circle cx="1220.6" cy="267.6" r="4.2" fill="#f4f4f4" stroke="#5e5e5e" stroke-width="1.1" />
<path d="M1225.6 262 H1229.4 V275.6 H1225.6" fill="none" stroke="#5e5e5e" stroke-width="1.1" />
<line x1="1225.2" y1="262.6" x2="1225.2" y2="275.0" stroke="#d8141e" stroke-width="1.2" />
<line x1="1222.0" y1="268.0" x2="1225.0" y2="268.0" stroke="#d8141e" stroke-width="1.2" />
<path d="M1215.5 296.9 V287.4 L1219.2 282.59999999999997 C1220.2 281.79999999999995 1222.4 281.79999999999995 1223 282.79999999999995 L1226.5 287.0 V296.9 L1223 293.59999999999997 H1219 Z" fill="#d2d2d2" stroke="#5e5e5e" stroke-width="1" stroke-linejoin="round"/>
<path d="M1219.2 283.4 C1220.2 282.79999999999995 1222.2 282.79999999999995 1223 283.59999999999997 V289.79999999999995 H1219.2 Z" fill="#e8e8e8" />
<path d="M1219.2 289.79999999999995 V293.59999999999997 M1223 283.59999999999997 V293.59999999999997" fill="none" stroke="#5e5e5e" stroke-width="0.8" />
<rect x="1223.0" y="288.6" width="8.6" height="8.4" rx="0" fill="#fff" />
<path d="M1222.8 292.6 H1231.4 M1227 288.4 V297" fill="none" stroke="#333" stroke-width="1" />
<polygon points="1227.0,287.4 1225.4,289.6 1228.6,289.6" fill="#333" />
<polygon points="1227.0,298.0 1225.4,295.8 1228.6,295.8" fill="#333" />
<polygon points="1232.0,292.6 1229.8,291.0 1229.8,294.2" fill="#333" />
<polygon points="1222.0,292.6 1224.2,291.0 1224.2,294.2" fill="#333" />
<circle cx="1226.4" cy="305.2" r="3.6" fill="#f4f4f4" stroke="#5e5e5e" stroke-width="1" />
<circle cx="1226.4" cy="305.2" r="1" fill="#5e5e5e" />
<path d="M1221.6 302.4 C1218.6 302.6 1217 305 1217.4 308" fill="none" stroke="#333" stroke-width="1" />
<polygon points="1217.4,309.4 1215.8,306.6 1219.0,306.8" fill="#333" />
<rect x="1215.4" y="311.0" width="10.2" height="4.4" rx="0" fill="#f4f4f4" stroke="#5e5e5e" stroke-width="1" />
<line x1="1225.6" y1="313.4" x2="1229.0" y2="313.4" stroke="#333" stroke-width="1" />
<polygon points="1230.6,313.4 1228.0,311.8 1228.0,315.0" fill="#333" />
<rect x="1215.0" y="322.4" width="6.6" height="15.2" rx="0" fill="#6aaee4" />
<rect x="1215.0" y="322.4" width="6.6" height="15.2" rx="0" fill="none" stroke="#4a92cc" stroke-width="0.8" />
<rect x="1224.2" y="325.6" width="6.4" height="11.6" rx="0" fill="#f8f8f8" stroke="#444" stroke-width="1" />
<rect x="1224.6" y="326.0" width="5.6" height="5.0" rx="0" fill="#4a92cc" />
<line x1="1224.2" y1="328.4" x2="1230.6" y2="328.4" stroke="#f4f4f4" stroke-width="0.8" />
<line x1="1221.4" y1="323.0" x2="1221.4" y2="330.0" stroke="#d8141e" stroke-width="1.2" />
<line x1="1221.4" y1="328.4" x2="1224.4" y2="328.4" stroke="#d8141e" stroke-width="1.1" />
<path d="M1215.4 356.4 V342.6 H1230 V356.4 H1225.4 V350.6 H1220 V356.4 Z" fill="#f1f1f1" stroke="#555" stroke-width="1" />
<line x1="1222.8" y1="342.6" x2="1222.8" y2="350.6" stroke="#d8141e" stroke-width="1.1" />
<line x1="1220.0" y1="348.2" x2="1225.6" y2="348.2" stroke="#d8141e" stroke-width="1.1" />
<line x1="1222.8" y1="350.6" x2="1222.8" y2="356.4" stroke="#555" stroke-width="1" />
<rect x="1216.4" y="365.4" width="5.6" height="6.2" rx="1" fill="#f4f4f4" stroke="#aaa" stroke-width="0.8" />
<rect x="1219.0" y="365.0" width="6.0" height="6.4" rx="1" fill="#eee" stroke="#999" stroke-width="0.8" />
<rect x="1222.4" y="364.6" width="7.2" height="7.0" rx="1.4" fill="#d6d6d6" stroke="#555" stroke-width="1" />
<path d="M1215 377.4 H1220 C1222 377.4 1223 373.6 1225.6 373.6 H1231" fill="none" stroke="#d8141e" stroke-width="1" />
<path d="M1215 375 H1219 C1221.6 375 1222.6 377.8 1225 377.8 H1231" fill="none" stroke="#1287e6" stroke-width="1" />
<path d="M1224 375.6 H1231" fill="none" stroke="#2aa84a" stroke-width="1" />
<rect x="1215.2" y="384.6" width="3.2" height="3.0" rx="0" fill="#4a92cc" />
<rect x="1216.8" y="387.6" width="3.2" height="3.0" rx="0" fill="#f4f4f4" stroke="#555" stroke-width="0.8" />
<path d="M1218.4 390.6 V399.6 H1221.4 M1218.4 393.6 H1221.4 M1218.4 396.6 H1221.4" fill="none" stroke="#777" stroke-width="0.8" />
<rect x="1222.8" y="388.4" width="7.8" height="11.4" rx="0" fill="#f8f8f8" stroke="#444" stroke-width="1" />
<rect x="1222.8" y="388.4" width="7.8" height="2.0" rx="0" fill="#444" />
<path d="M1222.8 393.4 H1230.6 M1222.8 396.6 H1230.6 M1226.6 390.4 V399.8" fill="none" stroke="#555" stroke-width="0.8" />
<circle cx="1393.9" cy="163.8" r="1.2" fill="#111" />
<circle cx="1393.9" cy="168.2" r="1.2" fill="#111" />
<circle cx="1393.9" cy="172.6" r="1.2" fill="#111" />
<path d="M1216.6 174 C1219 178 1224 183 1234.6 184.5 C1242 185 1256 181 1266.4 177.5 C1276 173 1290 168.6 1302.4 165.8 C1308 164.6 1311.6 163.6 1311.4 161.6 C1310.6 158 1306 154.4 1302.4 153.3 C1296 151 1290 150.6 1283 150.5 C1272 149.4 1264 149.4 1255.4 149.8 C1244 151 1236 153 1227.7 155.4 C1219 158.6 1212 162 1208.3 165 C1204.4 168.4 1203 171 1203.5 173.4 C1204.6 177 1208 180.4 1211.8 183" fill="none" stroke="#dc1616" stroke-width="2.6" stroke-linecap="round" stroke-linejoin="round"/>
</svg>
</div></body></html>
